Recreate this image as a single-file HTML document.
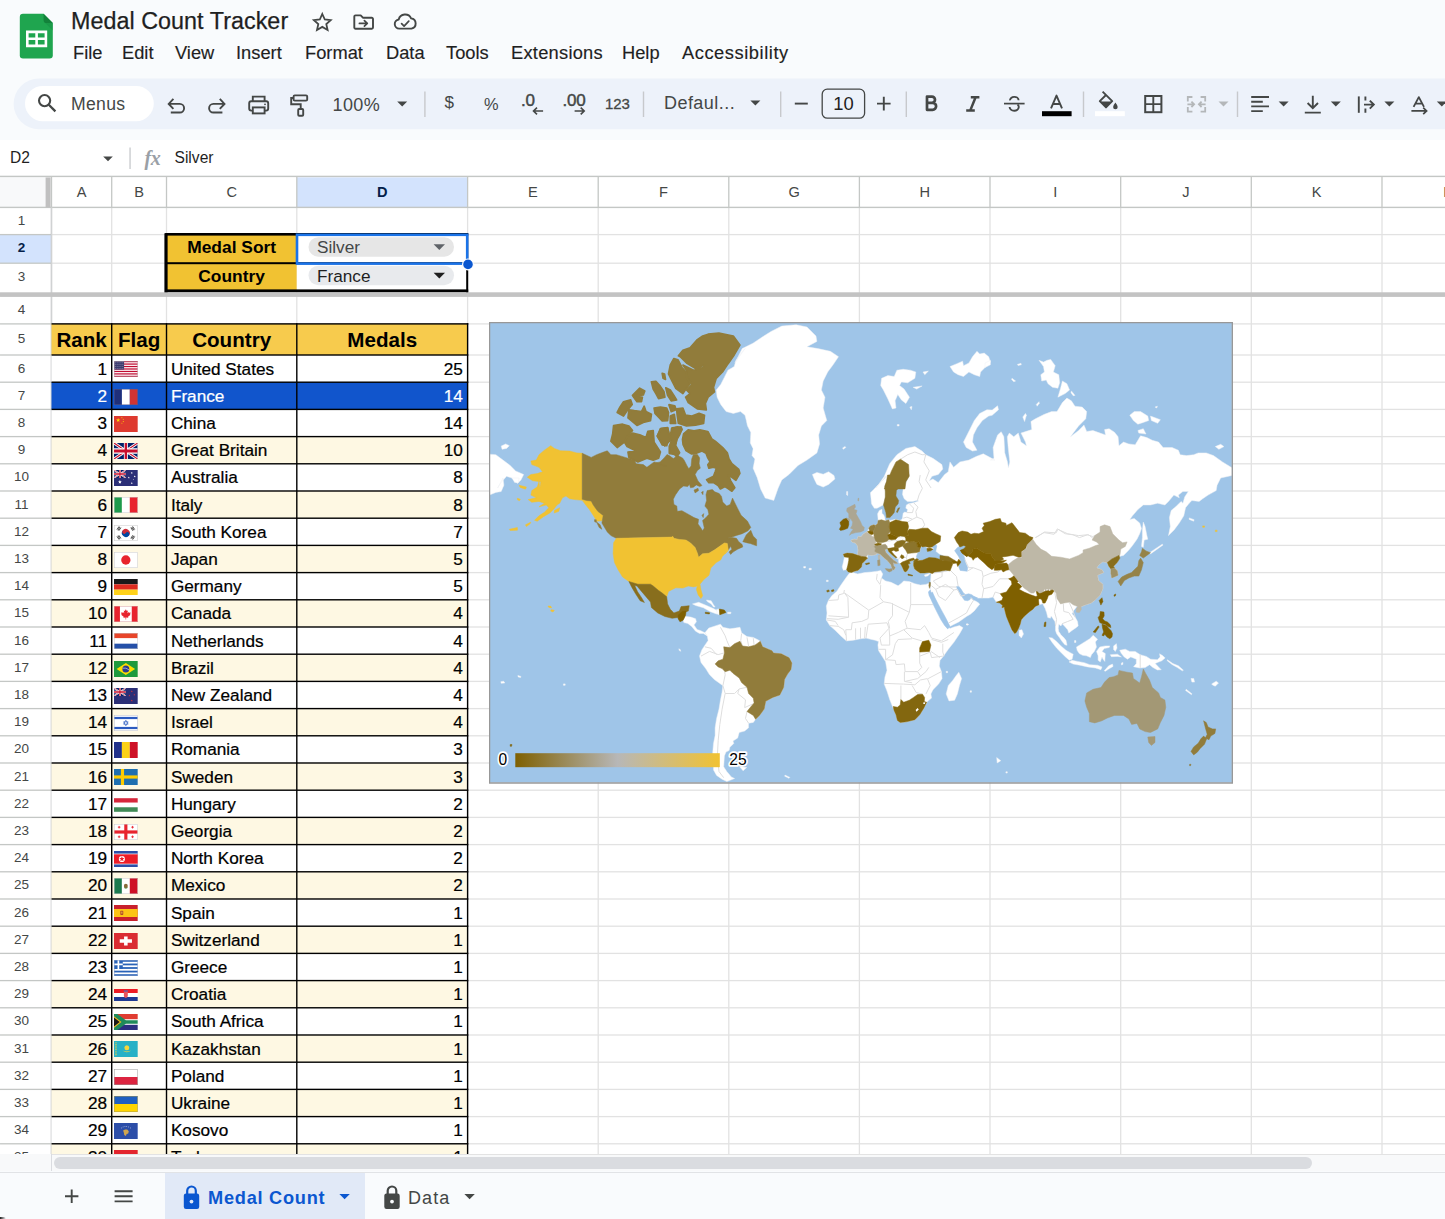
<!DOCTYPE html>
<html lang="en"><head><meta charset="utf-8"><title>Medal Count Tracker - Google Sheets</title>
<style>
*{box-sizing:border-box;margin:0;padding:0}
html,body{width:1445px;height:1219px;overflow:hidden;background:#f9fbfd;font-family:"Liberation Sans",sans-serif;color:#1f1f1f}
body{position:relative}
.abs{position:absolute}
#title{position:absolute;left:71px;top:6px;font-size:23.3px;line-height:30px;color:#1f1f1f;white-space:nowrap;letter-spacing:0.05px;-webkit-text-stroke:.25px #1f1f1f}
.menu{-webkit-text-stroke:.15px currentColor;position:absolute;top:40.5px;font-size:18.3px;line-height:24px;color:#1f1f1f;white-space:nowrap}
#toolbar{position:absolute;left:13.5px;top:78.5px;width:1460px;height:51px;border-radius:25.5px;background:#edf2fa}
#search{position:absolute;left:25px;top:86px;width:129px;height:35.5px;border-radius:18px;background:#fff}
.tb{position:absolute;color:#444746;white-space:nowrap;font-size:17.5px;line-height:24px;top:92.5px}
#tbsvg{position:absolute;left:0;top:0;pointer-events:none}
#fbar{position:absolute;left:0;top:139.8px;width:1445px;height:36.6px;background:#fff}
#fbar .t1{position:absolute;left:10px;top:6.8px;font-size:15.6px;line-height:22px;color:#1f1f1f}
#fbar .t2{position:absolute;left:174.5px;top:6.8px;font-size:15.6px;line-height:22px;color:#1f1f1f}
#grid{position:absolute;left:0;width:1445px;overflow:hidden;background:#fff}
.gridsvg{position:absolute;left:0;top:0;display:block}
.t{position:absolute;white-space:nowrap;overflow:visible}
.ch{text-align:center;font-size:14.6px;color:#444746}
.rh{text-align:center;font-size:13.5px;color:#444746}
.ch.sel,.rh.sel{font-weight:bold;color:#041e49}
.lab{text-align:center;font-weight:bold;font-size:17.4px;color:#000}
.chipt{font-size:17.2px;color:#1f1f1f}
.th{text-align:center;font-weight:bold;font-size:20.6px;color:#000}
.num{text-align:right;font-size:17.2px;color:#000;-webkit-text-stroke:.22px currentColor}
.nm{text-align:left;font-size:17.2px;color:#000;-webkit-text-stroke:.22px currentColor}
.w{color:#fff}
.flag{position:absolute;width:23.7px;height:16px;line-height:0}
.flag>svg{display:block;width:23.7px;height:16px}
#hscroll{position:absolute;left:0;top:1154.2px;width:1445px;height:17.3px;background:#f8f9fa;border-top:1px solid #e3e3e3}
#hthumb{position:absolute;left:54px;top:1157.2px;width:1258px;height:11.4px;border-radius:6px;background:#dadce0}
#tabs{position:absolute;left:0;top:1171.5px;width:1445px;height:48px;background:#f9fbfd;border-top:1.3px solid #e1e3e6}
#tabact{position:absolute;left:165px;top:1172.5px;width:200px;height:47px;background:#e1e9f7}
.tabt{position:absolute;top:1184.5px;font-size:18.2px;line-height:26px;white-space:nowrap;letter-spacing:0.75px}
#chart{position:absolute}

#fx{position:absolute;left:144.5px;top:147px;font-family:"Liberation Serif",serif;font-style:italic;font-weight:bold;font-size:20px;line-height:22px;color:#9aa0a6;letter-spacing:-.5px}

</style></head>
<body>

<!-- ===== title bar ===== -->
<svg class="abs" style="left:19px;top:13px" width="36" height="47" viewBox="19 13 36 47">
  <path d="M23 13.8 H43.6 L52.8 23 V55.3 a3.2 3.2 0 0 1 -3.2 3.2 H23 a3.2 3.2 0 0 1 -3.2 -3.2 V17 a3.2 3.2 0 0 1 3.2 -3.2z" fill="#1fa54f"/>
  <path d="M43.6 13.8 L52.8 23 H46.4 a2.8 2.8 0 0 1 -2.8 -2.8z" fill="#13823b"/>
  <path d="M44.4 22.2 L52.8 30.6 V23 H46.4z" fill="#158f43" opacity=".5"/>
  <path d="M26 30.6 h21.2 v16.6 h-21.2z M28.6 33.2 v4.3 h6.7 v-4.3z M37.9 33.2 v4.3 h6.7 v-4.3z M28.6 40.1 v4.5 h6.7 v-4.5z M37.9 40.1 v4.5 h6.7 v-4.5z" fill="#fff" fill-rule="evenodd"/>
</svg>
<div id="title">Medal Count Tracker</div>
<svg class="abs" style="left:305px;top:8px" width="120" height="28" viewBox="305 8 120 28" fill="none" stroke="#444746" stroke-width="1.9" stroke-linejoin="round" stroke-linecap="round">
  <!-- star -->
  <path d="M322.3 14 l2.5 5.5 5.9 .6 -4.4 4 1.3 5.9 -5.3 -3.1 -5.3 3.1 1.3 -5.9 -4.4 -4 5.9 -.6z" stroke-width="1.8" stroke-linejoin="miter"/>
  <!-- folder move -->
  <path d="M354.3 16.6 a1.2 1.2 0 0 1 1.2 -1.2 h5.2 l2.2 2.3 h8.9 a1.2 1.2 0 0 1 1.2 1.2 v8.7 a1.2 1.2 0 0 1 -1.2 1.2 h-16.3 a1.2 1.2 0 0 1 -1.2 -1.2z"/>
  <path d="M359.4 23.4 h7.4 M364.4 20.6 l2.9 2.8 -2.9 2.8" stroke-width="1.7"/>
  <!-- cloud done -->
  <path d="M399.2 28.6 a4.6 4.6 0 0 1 -.5 -9.15 a6.6 6.6 0 0 1 12.4 -1.1 a5.2 5.2 0 0 1 .4 10.25z"/>
  <path d="M401.6 23.6 l2.5 2.5 4.7 -4.9" stroke-width="1.7"/>
</svg>
<div class="menu" style="left:73px">File</div>
<div class="menu" style="left:122px">Edit</div>
<div class="menu" style="left:175px">View</div>
<div class="menu" style="left:236px">Insert</div>
<div class="menu" style="left:305px">Format</div>
<div class="menu" style="left:386px">Data</div>
<div class="menu" style="left:446px">Tools</div>
<div class="menu" style="left:511px;letter-spacing:.25px">Extensions</div>
<div class="menu" style="left:622px">Help</div>
<div class="menu" style="left:682px;letter-spacing:.55px">Accessibility</div>

<!-- ===== toolbar ===== -->
<svg class="abs" style="left:0;top:70px" width="1445" height="70" viewBox="0 70 1445 70"><rect x="13.6" y="78.6" width="1470" height="50.6" rx="25.3" fill="#edf2fa"/><rect x="25" y="85.9" width="128.8" height="35.4" rx="17.7" fill="#fff"/></svg>
<div class="tb" style="left:71px;font-size:17.6px;top:91.5px;letter-spacing:.3px">Menus</div>
<div class="tb" style="left:332.5px;font-size:18px;top:93px;letter-spacing:.4px">100%</div>
<div class="tb" style="left:444.5px;font-size:17px;top:91px">$</div>
<div class="tb" style="left:484px;font-size:16.4px;top:91.5px">%</div>
<div class="tb" style="left:521px;font-size:17px;top:88.5px;-webkit-text-stroke:.45px #444746;letter-spacing:-.2px">.0</div>
<div class="tb" style="left:562.5px;font-size:17px;top:88.5px;-webkit-text-stroke:.45px #444746;letter-spacing:-.2px">.00</div>
<div class="tb" style="left:605px;font-size:15px;top:91.5px;-webkit-text-stroke:.3px #444746;letter-spacing:-.1px">123</div>
<div class="tb" style="left:664px;font-size:18px;top:91px;letter-spacing:.45px">Defaul...</div>
<div class="tb" style="left:821.6px;width:43.6px;text-align:center;font-size:18.4px;top:92px;color:#1f1f1f">10</div>
<svg id="tbsvg" width="1445" height="140" viewBox="0 0 1445 140" fill="none" stroke="#444746" stroke-width="2" stroke-linecap="butt" stroke-linejoin="miter">
  <!-- search icon -->
  <circle cx="44.6" cy="100.6" r="5.6" stroke-width="2.1"/>
  <path d="M48.8 104.8 l6.6 6.6" stroke-width="2.3"/>
  <!-- undo -->
  <path d="M173.4 98.9 L168.7 103.9 L173.4 108.9 M169.3 103.9 H179.8 a4.3 4.3 0 0 1 0 8.6 H170.8" stroke-width="1.9"/>
  <!-- redo -->
  <path d="M219.8 98.9 L224.5 103.9 L219.8 108.9 M223.9 103.9 H213.4 a4.3 4.3 0 0 0 0 8.6 H222.4" stroke-width="1.9"/>
  <!-- print -->
  <path d="M252.8 101.2 V96.6 H264.6 V101.2" stroke-width="1.9"/>
  <rect x="249.2" y="101.2" width="19" height="9.4" rx="2" stroke-width="1.9"/>
  <rect x="252.8" y="107.4" width="11.8" height="6" fill="#edf2fa" stroke-width="1.9"/>
  <circle cx="265" cy="104.3" r=".9" fill="#444746" stroke="none"/>
  <!-- paint format -->
  <rect x="293.6" y="95.4" width="13.6" height="5.2" rx="1.2" stroke-width="1.9"/>
  <path d="M293.6 98 H291.2 V104.2 H300.7 V109" stroke-width="1.9"/>
  <rect x="298.2" y="109" width="5" height="6.8" rx="1" stroke-width="1.9"/>
  <!-- dropdown arrows -->
  <g fill="#444746" stroke="none">
    <path d="M397.2 101.4 h10 l-5 5z"/>
    <path d="M750.4 100.4 h10 l-5 5z"/>
    <path d="M1278.6 101.4 h10 l-5 5z"/>
    <path d="M1330.8 101.4 h10 l-5 5z"/>
    <path d="M1384.4 101.4 h10 l-5 5z"/>
    <path d="M1436.8 101.4 h10 l-5 5z"/>
    <path d="M1218.5 101.4 h10 l-5 5z" fill="#b4b7b9"/>
  </g>
  <!-- separators -->
  <g fill="#c7c9cc" stroke="none">
    <rect x="424.2" y="91.5" width="1.4" height="25.5"/>
    <rect x="642.8" y="91.5" width="1.4" height="25.5"/>
    <rect x="780" y="91.5" width="1.4" height="25.5"/>
    <rect x="905.6" y="91.5" width="1.4" height="25.5"/>
    <rect x="1082.8" y="91.5" width="1.4" height="25.5"/>
    <rect x="1236.8" y="91.5" width="1.4" height="25.5"/>
  </g>
  <!-- decimal arrows -->
  <path d="M533.5 111 h9.6 M537 107.6 l-3.5 3.4 3.5 3.4" stroke-width="1.6"/>
  <path d="M574.6 111 h9.6 M580.7 107.6 l3.5 3.4 -3.5 3.4" stroke-width="1.6"/>
  <!-- minus / plus -->
  <path d="M794.8 103.6 h13" stroke-width="1.9"/>
  <rect x="822.2" y="89.2" width="42.4" height="29" rx="5" stroke-width="1.3" stroke="#444746"/>
  <path d="M877 103.6 h13.6 M883.8 96.8 v13.6" stroke-width="1.9"/>
  <!-- bold -->
  <path d="M927 96.6 h4.9 a3.1 3.1 0 0 1 0 6.2 h-4.9z M927 102.8 h5.6 a3.5 3.5 0 0 1 0 7 h-5.6z" stroke-width="2.7" stroke-linejoin="round"/>
  <!-- italic -->
  <path d="M970.8 97.2 h8.6 M966.2 110.6 h8.6 M975.6 97.2 l-5.4 13.4" stroke-width="2.5"/>
  <!-- strikethrough -->
  <path d="M1004 103.6 h20.6" stroke-width="1.7"/>
  <path d="M1018.6 100.2 a4.3 3.4 0 0 0 -8.6 .2 M1009.6 107 a4.5 3.6 0 0 0 9.2 0.1 q0 -1.6 -1.3 -2.6" stroke-width="1.9"/>
  <!-- text color -->
  <path d="M1051 108.4 l5.5 -12.8 5.5 12.8 M1052.9 104 h7.2" stroke-width="1.9" stroke-linejoin="round"/>
  <rect x="1042" y="111.2" width="29.6" height="5" fill="#000" stroke="none"/>
  <!-- fill color -->
  <rect x="1095" y="111.2" width="29.8" height="5" fill="#fff" stroke="none"/>
  <path d="M1102.6 91.6 l9.6 9.6 -6.2 6.2 -6.2 -6.2 6.2 -6.2" stroke-width="1.9" stroke-linejoin="round"/>
  <path d="M1100.2 101.4 h11.6 l-5.8 5.8z" fill="#444746" stroke="none"/>
  <path d="M1115.4 102.6 q2.3 3 2.3 4.3 a2.3 2.3 0 0 1 -4.6 0 q0 -1.3 2.3 -4.3z" fill="#444746" stroke="none"/>
  <!-- borders -->
  <rect x="1145.2" y="96" width="16.2" height="16.2" stroke-width="2"/>
  <path d="M1153.3 96 v16.2 M1145.2 104.1 h16.2" stroke-width="1.9"/>
  <!-- merge (disabled) -->
  <g stroke="#b4b7b9" stroke-width="1.8">
    <path d="M1192.4 97 h-4.6 v4.6 M1200.6 97 h4.6 v4.6 M1192.4 111.6 h-4.6 v-4.6 M1200.6 111.6 h4.6 v-4.6"/>
    <path d="M1187.4 104.3 h6.6 M1191.4 101.6 l2.7 2.7 -2.7 2.7 M1205.6 104.3 h-6.6 M1201.6 101.6 l-2.7 2.7 2.7 2.7"/>
  </g>
  <!-- h-align -->
  <path d="M1251.2 97 h17.8 M1251.2 101.7 h11.6 M1251.2 106.4 h17.8 M1251.2 111.1 h11.6" stroke-width="1.9"/>
  <!-- v-align -->
  <path d="M1304.8 112.6 h16 M1312.8 95.8 v12.2 M1307.6 103 l5.2 5.2 5.2 -5.2" stroke-width="1.9"/>
  <!-- wrap -->
  <path d="M1358.8 96.4 v16.4" stroke-width="1.9"/>
  <path d="M1365.4 96.4 v4.2 M1365.4 108.6 v4.2" stroke-width="1.9"/>
  <path d="M1364 104.6 h9.4 M1369.8 100.6 l4 4 -4 4" stroke-width="1.9"/>
  <!-- rotate -->
  <path d="M1413.6 106.9 l5.2 -9.8 5.2 9.8 M1415.4 103.6 h6.8" stroke-width="1.8" stroke-linejoin="round"/>
  <path d="M1411.4 110.9 h15 M1423.2 107.6 l3.4 3.3 -3.4 3.3" stroke-width="1.7"/>
</svg>

<!-- ===== formula bar ===== -->
<div id="fbar">
  <div class="t1">D2</div>
  <div class="t2">Silver</div>
  <svg class="abs" style="left:95px;top:-1.8px" width="80" height="38" viewBox="95 138 80 38">
    <path d="M103.2 156.4 h9.6 l-4.8 4.8z" fill="#444746"/>
    <rect x="129.4" y="147.5" width="1.3" height="21.5" fill="#c7c9cc"/>
    
  </svg>
</div>

<div id="fx">fx</div>

<div id="grid" style="top:175px;height:979.2px">
<svg class="gridsvg" width="1445" height="979.2" viewBox="0 175 1445 979.2" shape-rendering="geometricPrecision">
<rect x="0" y="175" width="1445" height="979.2" fill="#fff"/>
<rect x="0" y="176.4" width="1445" height="31" fill="#fff"/>
<rect x="0" y="176.4" width="46" height="31" fill="#f8f9fa"/>
<rect x="0" y="207.4" width="51" height="946.8" fill="#fff"/>
<rect x="296.8" y="177.4" width="170.8" height="30" fill="#d3e3fd"/>
<rect x="0" y="234.6" width="51" height="28.6" fill="#d3e3fd"/>
<rect x="111.05" y="207.4" width="1.3" height="946.8" fill="#e2e2e2"/>
<rect x="165.85" y="207.4" width="1.3" height="946.8" fill="#e2e2e2"/>
<rect x="296.15" y="207.4" width="1.3" height="946.8" fill="#e2e2e2"/>
<rect x="466.95" y="207.4" width="1.3" height="946.8" fill="#e2e2e2"/>
<rect x="597.55" y="207.4" width="1.3" height="946.8" fill="#e2e2e2"/>
<rect x="728.15" y="207.4" width="1.3" height="946.8" fill="#e2e2e2"/>
<rect x="858.75" y="207.4" width="1.3" height="946.8" fill="#e2e2e2"/>
<rect x="989.35" y="207.4" width="1.3" height="946.8" fill="#e2e2e2"/>
<rect x="1120.05" y="207.4" width="1.3" height="946.8" fill="#e2e2e2"/>
<rect x="1250.65" y="207.4" width="1.3" height="946.8" fill="#e2e2e2"/>
<rect x="1381.35" y="207.4" width="1.3" height="946.8" fill="#e2e2e2"/>
<rect x="1511.95" y="207.4" width="1.3" height="946.8" fill="#e2e2e2"/>
<rect x="51" y="233.95" width="1445" height="1.3" fill="#e2e2e2"/>
<rect x="51" y="262.55" width="1445" height="1.3" fill="#e2e2e2"/>
<rect x="51" y="323.25" width="1445" height="1.3" fill="#e2e2e2"/>
<rect x="51" y="354.35" width="1445" height="1.3" fill="#e2e2e2"/>
<rect x="51" y="381.55" width="1445" height="1.3" fill="#e2e2e2"/>
<rect x="51" y="408.75" width="1445" height="1.3" fill="#e2e2e2"/>
<rect x="51" y="435.95" width="1445" height="1.3" fill="#e2e2e2"/>
<rect x="51" y="463.15" width="1445" height="1.3" fill="#e2e2e2"/>
<rect x="51" y="490.35" width="1445" height="1.3" fill="#e2e2e2"/>
<rect x="51" y="517.55" width="1445" height="1.3" fill="#e2e2e2"/>
<rect x="51" y="544.75" width="1445" height="1.3" fill="#e2e2e2"/>
<rect x="51" y="571.95" width="1445" height="1.3" fill="#e2e2e2"/>
<rect x="51" y="599.15" width="1445" height="1.3" fill="#e2e2e2"/>
<rect x="51" y="626.35" width="1445" height="1.3" fill="#e2e2e2"/>
<rect x="51" y="653.55" width="1445" height="1.3" fill="#e2e2e2"/>
<rect x="51" y="680.75" width="1445" height="1.3" fill="#e2e2e2"/>
<rect x="51" y="707.95" width="1445" height="1.3" fill="#e2e2e2"/>
<rect x="51" y="735.15" width="1445" height="1.3" fill="#e2e2e2"/>
<rect x="51" y="762.35" width="1445" height="1.3" fill="#e2e2e2"/>
<rect x="51" y="789.55" width="1445" height="1.3" fill="#e2e2e2"/>
<rect x="51" y="816.75" width="1445" height="1.3" fill="#e2e2e2"/>
<rect x="51" y="843.95" width="1445" height="1.3" fill="#e2e2e2"/>
<rect x="51" y="871.15" width="1445" height="1.3" fill="#e2e2e2"/>
<rect x="51" y="898.35" width="1445" height="1.3" fill="#e2e2e2"/>
<rect x="51" y="925.55" width="1445" height="1.3" fill="#e2e2e2"/>
<rect x="51" y="952.75" width="1445" height="1.3" fill="#e2e2e2"/>
<rect x="51" y="979.95" width="1445" height="1.3" fill="#e2e2e2"/>
<rect x="51" y="1007.15" width="1445" height="1.3" fill="#e2e2e2"/>
<rect x="51" y="1034.35" width="1445" height="1.3" fill="#e2e2e2"/>
<rect x="51" y="1061.55" width="1445" height="1.3" fill="#e2e2e2"/>
<rect x="51" y="1088.75" width="1445" height="1.3" fill="#e2e2e2"/>
<rect x="51" y="1115.95" width="1445" height="1.3" fill="#e2e2e2"/>
<rect x="51" y="1143.15" width="1445" height="1.3" fill="#e2e2e2"/>
<rect x="51" y="1170.35" width="1445" height="1.3" fill="#e2e2e2"/>
<rect x="0" y="175.7" width="1445" height="1.4" fill="#c4c7c5"/>
<rect x="0" y="206.7" width="1445" height="1.4" fill="#c4c7c5"/>
<rect x="50.85" y="176.4" width="1.3" height="31" fill="#c4c7c5"/>
<rect x="111.05" y="176.4" width="1.3" height="31" fill="#c4c7c5"/>
<rect x="165.85" y="176.4" width="1.3" height="31" fill="#c4c7c5"/>
<rect x="296.15" y="176.4" width="1.3" height="31" fill="#c4c7c5"/>
<rect x="466.95" y="176.4" width="1.3" height="31" fill="#c4c7c5"/>
<rect x="597.55" y="176.4" width="1.3" height="31" fill="#c4c7c5"/>
<rect x="728.15" y="176.4" width="1.3" height="31" fill="#c4c7c5"/>
<rect x="858.75" y="176.4" width="1.3" height="31" fill="#c4c7c5"/>
<rect x="989.35" y="176.4" width="1.3" height="31" fill="#c4c7c5"/>
<rect x="1120.05" y="176.4" width="1.3" height="31" fill="#c4c7c5"/>
<rect x="1250.65" y="176.4" width="1.3" height="31" fill="#c4c7c5"/>
<rect x="1381.35" y="176.4" width="1.3" height="31" fill="#c4c7c5"/>
<rect x="1511.95" y="176.4" width="1.3" height="31" fill="#c4c7c5"/>
<rect x="50.6" y="207.4" width="1.7" height="946.8" fill="#d0d2d3"/>
<rect x="0" y="233.95" width="51" height="1.3" fill="#c4c7c5"/>
<rect x="0" y="262.55" width="51" height="1.3" fill="#c4c7c5"/>
<rect x="0" y="323.25" width="51" height="1.3" fill="#c4c7c5"/>
<rect x="0" y="354.35" width="51" height="1.3" fill="#c4c7c5"/>
<rect x="0" y="381.55" width="51" height="1.3" fill="#c4c7c5"/>
<rect x="0" y="408.75" width="51" height="1.3" fill="#c4c7c5"/>
<rect x="0" y="435.95" width="51" height="1.3" fill="#c4c7c5"/>
<rect x="0" y="463.15" width="51" height="1.3" fill="#c4c7c5"/>
<rect x="0" y="490.35" width="51" height="1.3" fill="#c4c7c5"/>
<rect x="0" y="517.55" width="51" height="1.3" fill="#c4c7c5"/>
<rect x="0" y="544.75" width="51" height="1.3" fill="#c4c7c5"/>
<rect x="0" y="571.95" width="51" height="1.3" fill="#c4c7c5"/>
<rect x="0" y="599.15" width="51" height="1.3" fill="#c4c7c5"/>
<rect x="0" y="626.35" width="51" height="1.3" fill="#c4c7c5"/>
<rect x="0" y="653.55" width="51" height="1.3" fill="#c4c7c5"/>
<rect x="0" y="680.75" width="51" height="1.3" fill="#c4c7c5"/>
<rect x="0" y="707.95" width="51" height="1.3" fill="#c4c7c5"/>
<rect x="0" y="735.15" width="51" height="1.3" fill="#c4c7c5"/>
<rect x="0" y="762.35" width="51" height="1.3" fill="#c4c7c5"/>
<rect x="0" y="789.55" width="51" height="1.3" fill="#c4c7c5"/>
<rect x="0" y="816.75" width="51" height="1.3" fill="#c4c7c5"/>
<rect x="0" y="843.95" width="51" height="1.3" fill="#c4c7c5"/>
<rect x="0" y="871.15" width="51" height="1.3" fill="#c4c7c5"/>
<rect x="0" y="898.35" width="51" height="1.3" fill="#c4c7c5"/>
<rect x="0" y="925.55" width="51" height="1.3" fill="#c4c7c5"/>
<rect x="0" y="952.75" width="51" height="1.3" fill="#c4c7c5"/>
<rect x="0" y="979.95" width="51" height="1.3" fill="#c4c7c5"/>
<rect x="0" y="1007.15" width="51" height="1.3" fill="#c4c7c5"/>
<rect x="0" y="1034.35" width="51" height="1.3" fill="#c4c7c5"/>
<rect x="0" y="1061.55" width="51" height="1.3" fill="#c4c7c5"/>
<rect x="0" y="1088.75" width="51" height="1.3" fill="#c4c7c5"/>
<rect x="0" y="1115.95" width="51" height="1.3" fill="#c4c7c5"/>
<rect x="0" y="1143.15" width="51" height="1.3" fill="#c4c7c5"/>
<rect x="0" y="1170.35" width="51" height="1.3" fill="#c4c7c5"/>
<rect x="0" y="1197.55" width="51" height="1.3" fill="#c4c7c5"/>
<rect x="45.6" y="177.4" width="5" height="30" fill="#c0c0c0"/>
<rect x="166.5" y="234.6" width="130.3" height="57" fill="#f1c232"/>
<rect x="296.8" y="234.6" width="170.8" height="57" fill="#fff"/>
<rect x="51.5" y="323.9" width="416.1" height="31.1" fill="#f7cb4d"/>
<rect x="51.5" y="355" width="416.1" height="27.2" fill="#fff"/>
<rect x="51.5" y="382.2" width="416.1" height="27.2" fill="#1155cc"/>
<rect x="51.5" y="409.4" width="416.1" height="27.2" fill="#fff"/>
<rect x="51.5" y="436.6" width="416.1" height="27.2" fill="#fef8e3"/>
<rect x="51.5" y="463.8" width="416.1" height="27.2" fill="#fff"/>
<rect x="51.5" y="491" width="416.1" height="27.2" fill="#fef8e3"/>
<rect x="51.5" y="518.2" width="416.1" height="27.2" fill="#fff"/>
<rect x="51.5" y="545.4" width="416.1" height="27.2" fill="#fef8e3"/>
<rect x="51.5" y="572.6" width="416.1" height="27.2" fill="#fff"/>
<rect x="51.5" y="599.8" width="416.1" height="27.2" fill="#fef8e3"/>
<rect x="51.5" y="627" width="416.1" height="27.2" fill="#fff"/>
<rect x="51.5" y="654.2" width="416.1" height="27.2" fill="#fef8e3"/>
<rect x="51.5" y="681.4" width="416.1" height="27.2" fill="#fff"/>
<rect x="51.5" y="708.6" width="416.1" height="27.2" fill="#fef8e3"/>
<rect x="51.5" y="735.8" width="416.1" height="27.2" fill="#fff"/>
<rect x="51.5" y="763" width="416.1" height="27.2" fill="#fef8e3"/>
<rect x="51.5" y="790.2" width="416.1" height="27.2" fill="#fff"/>
<rect x="51.5" y="817.4" width="416.1" height="27.2" fill="#fef8e3"/>
<rect x="51.5" y="844.6" width="416.1" height="27.2" fill="#fff"/>
<rect x="51.5" y="871.8" width="416.1" height="27.2" fill="#fef8e3"/>
<rect x="51.5" y="899" width="416.1" height="27.2" fill="#fff"/>
<rect x="51.5" y="926.2" width="416.1" height="27.2" fill="#fef8e3"/>
<rect x="51.5" y="953.4" width="416.1" height="27.2" fill="#fff"/>
<rect x="51.5" y="980.6" width="416.1" height="27.2" fill="#fef8e3"/>
<rect x="51.5" y="1007.8" width="416.1" height="27.2" fill="#fff"/>
<rect x="51.5" y="1035" width="416.1" height="27.2" fill="#fef8e3"/>
<rect x="51.5" y="1062.2" width="416.1" height="27.2" fill="#fff"/>
<rect x="51.5" y="1089.4" width="416.1" height="27.2" fill="#fef8e3"/>
<rect x="51.5" y="1116.6" width="416.1" height="27.2" fill="#fff"/>
<rect x="51.5" y="1143.8" width="416.1" height="27.2" fill="#fef8e3"/>
<rect x="51.5" y="1171" width="416.1" height="27.2" fill="#fff"/>
<rect x="51.5" y="323.2" width="416.8" height="1.4" fill="#000"/>
<rect x="51.5" y="354.3" width="416.8" height="1.4" fill="#000"/>
<rect x="51.5" y="381.5" width="416.8" height="1.4" fill="#000"/>
<rect x="51.5" y="408.7" width="416.8" height="1.4" fill="#000"/>
<rect x="51.5" y="435.9" width="416.8" height="1.4" fill="#000"/>
<rect x="51.5" y="463.1" width="416.8" height="1.4" fill="#000"/>
<rect x="51.5" y="490.3" width="416.8" height="1.4" fill="#000"/>
<rect x="51.5" y="517.5" width="416.8" height="1.4" fill="#000"/>
<rect x="51.5" y="544.7" width="416.8" height="1.4" fill="#000"/>
<rect x="51.5" y="571.9" width="416.8" height="1.4" fill="#000"/>
<rect x="51.5" y="599.1" width="416.8" height="1.4" fill="#000"/>
<rect x="51.5" y="626.3" width="416.8" height="1.4" fill="#000"/>
<rect x="51.5" y="653.5" width="416.8" height="1.4" fill="#000"/>
<rect x="51.5" y="680.7" width="416.8" height="1.4" fill="#000"/>
<rect x="51.5" y="707.9" width="416.8" height="1.4" fill="#000"/>
<rect x="51.5" y="735.1" width="416.8" height="1.4" fill="#000"/>
<rect x="51.5" y="762.3" width="416.8" height="1.4" fill="#000"/>
<rect x="51.5" y="789.5" width="416.8" height="1.4" fill="#000"/>
<rect x="51.5" y="816.7" width="416.8" height="1.4" fill="#000"/>
<rect x="51.5" y="843.9" width="416.8" height="1.4" fill="#000"/>
<rect x="51.5" y="871.1" width="416.8" height="1.4" fill="#000"/>
<rect x="51.5" y="898.3" width="416.8" height="1.4" fill="#000"/>
<rect x="51.5" y="925.5" width="416.8" height="1.4" fill="#000"/>
<rect x="51.5" y="952.7" width="416.8" height="1.4" fill="#000"/>
<rect x="51.5" y="979.9" width="416.8" height="1.4" fill="#000"/>
<rect x="51.5" y="1007.1" width="416.8" height="1.4" fill="#000"/>
<rect x="51.5" y="1034.3" width="416.8" height="1.4" fill="#000"/>
<rect x="51.5" y="1061.5" width="416.8" height="1.4" fill="#000"/>
<rect x="51.5" y="1088.7" width="416.8" height="1.4" fill="#000"/>
<rect x="51.5" y="1115.9" width="416.8" height="1.4" fill="#000"/>
<rect x="51.5" y="1143.1" width="416.8" height="1.4" fill="#000"/>
<rect x="51.5" y="1170.3" width="416.8" height="1.4" fill="#000"/>
<rect x="111" y="323.2" width="1.4" height="836" fill="#000"/>
<rect x="165.8" y="323.2" width="1.4" height="836" fill="#000"/>
<rect x="296.1" y="323.2" width="1.4" height="836" fill="#000"/>
<rect x="466.9" y="323.2" width="1.4" height="836" fill="#000"/>
<rect x="165.2" y="233" width="303" height="2.6" fill="#000"/>
<rect x="165.2" y="289.4" width="303" height="3" fill="#000"/>
<rect x="164.4" y="233.3" width="3.2" height="59.7" fill="#000"/>
<rect x="466.2" y="233.3" width="2" height="59.7" fill="#000"/>
<rect x="166.5" y="262.2" width="301.1" height="2" fill="#000"/>
<rect x="0" y="292.3" width="1445" height="4.6" fill="#c3c3c3"/>
<rect x="308.5" y="237.15" width="145.5" height="19.5" rx="9.75" fill="#e6e6e6"/>
<path d="M433.6 244.3 h11.4 l-5.7 5.6z" fill="#5f6368"/>
<rect x="308.5" y="265.65" width="145.5" height="19.5" rx="9.75" fill="#e8eaed"/>
<path d="M433.6 272.8 h11.4 l-5.7 5.6z" fill="#1f1f1f"/>
<rect x="297" y="234.8" width="170.2" height="28.8" fill="none" stroke="#1a73e8" stroke-width="2.6"/>
<circle cx="468" cy="264.4" r="5.4" fill="#0b57d0" stroke="#fff" stroke-width="1.2"/>
</svg>
<div class="t ch" style="left:51.5px;top:2.4px;width:60.2px;height:31px;line-height:31px;">A</div>
<div class="t ch" style="left:111.7px;top:2.4px;width:54.8px;height:31px;line-height:31px;">B</div>
<div class="t ch" style="left:166.5px;top:2.4px;width:130.3px;height:31px;line-height:31px;">C</div>
<div class="t ch sel" style="left:296.8px;top:2.4px;width:170.8px;height:31px;line-height:31px;">D</div>
<div class="t ch" style="left:467.6px;top:2.4px;width:130.6px;height:31px;line-height:31px;">E</div>
<div class="t ch" style="left:598.2px;top:2.4px;width:130.6px;height:31px;line-height:31px;">F</div>
<div class="t ch" style="left:728.8px;top:2.4px;width:130.6px;height:31px;line-height:31px;">G</div>
<div class="t ch" style="left:859.4px;top:2.4px;width:130.6px;height:31px;line-height:31px;">H</div>
<div class="t ch" style="left:990px;top:2.4px;width:130.7px;height:31px;line-height:31px;">I</div>
<div class="t ch" style="left:1120.7px;top:2.4px;width:130.6px;height:31px;line-height:31px;">J</div>
<div class="t ch" style="left:1251.3px;top:2.4px;width:130.7px;height:31px;line-height:31px;">K</div>
<div class="t ch" style="left:1382px;top:2.4px;width:130.6px;height:31px;line-height:31px;">L</div>
<div class="t rh" style="left:0px;top:31.9px;width:43.2px;height:27.2px;line-height:27.2px;">1</div>
<div class="t rh sel" style="left:0px;top:59.1px;width:43.2px;height:28.6px;line-height:28.6px;">2</div>
<div class="t rh" style="left:0px;top:87.7px;width:43.2px;height:28.4px;line-height:28.4px;">3</div>
<div class="t rh" style="left:0px;top:121.7px;width:43.2px;height:26.7px;line-height:26.7px;">4</div>
<div class="t rh" style="left:0px;top:148.4px;width:43.2px;height:31.1px;line-height:31.1px;">5</div>
<div class="t rh" style="left:0px;top:179.5px;width:43.2px;height:27.2px;line-height:27.2px;">6</div>
<div class="t rh" style="left:0px;top:206.7px;width:43.2px;height:27.2px;line-height:27.2px;">7</div>
<div class="t rh" style="left:0px;top:233.9px;width:43.2px;height:27.2px;line-height:27.2px;">8</div>
<div class="t rh" style="left:0px;top:261.1px;width:43.2px;height:27.2px;line-height:27.2px;">9</div>
<div class="t rh" style="left:0px;top:288.3px;width:43.2px;height:27.2px;line-height:27.2px;">10</div>
<div class="t rh" style="left:0px;top:315.5px;width:43.2px;height:27.2px;line-height:27.2px;">11</div>
<div class="t rh" style="left:0px;top:342.7px;width:43.2px;height:27.2px;line-height:27.2px;">12</div>
<div class="t rh" style="left:0px;top:369.9px;width:43.2px;height:27.2px;line-height:27.2px;">13</div>
<div class="t rh" style="left:0px;top:397.1px;width:43.2px;height:27.2px;line-height:27.2px;">14</div>
<div class="t rh" style="left:0px;top:424.3px;width:43.2px;height:27.2px;line-height:27.2px;">15</div>
<div class="t rh" style="left:0px;top:451.5px;width:43.2px;height:27.2px;line-height:27.2px;">16</div>
<div class="t rh" style="left:0px;top:478.7px;width:43.2px;height:27.2px;line-height:27.2px;">17</div>
<div class="t rh" style="left:0px;top:505.9px;width:43.2px;height:27.2px;line-height:27.2px;">18</div>
<div class="t rh" style="left:0px;top:533.1px;width:43.2px;height:27.2px;line-height:27.2px;">19</div>
<div class="t rh" style="left:0px;top:560.3px;width:43.2px;height:27.2px;line-height:27.2px;">20</div>
<div class="t rh" style="left:0px;top:587.5px;width:43.2px;height:27.2px;line-height:27.2px;">21</div>
<div class="t rh" style="left:0px;top:614.7px;width:43.2px;height:27.2px;line-height:27.2px;">22</div>
<div class="t rh" style="left:0px;top:641.9px;width:43.2px;height:27.2px;line-height:27.2px;">23</div>
<div class="t rh" style="left:0px;top:669.1px;width:43.2px;height:27.2px;line-height:27.2px;">24</div>
<div class="t rh" style="left:0px;top:696.3px;width:43.2px;height:27.2px;line-height:27.2px;">25</div>
<div class="t rh" style="left:0px;top:723.5px;width:43.2px;height:27.2px;line-height:27.2px;">26</div>
<div class="t rh" style="left:0px;top:750.7px;width:43.2px;height:27.2px;line-height:27.2px;">27</div>
<div class="t rh" style="left:0px;top:777.9px;width:43.2px;height:27.2px;line-height:27.2px;">28</div>
<div class="t rh" style="left:0px;top:805.1px;width:43.2px;height:27.2px;line-height:27.2px;">29</div>
<div class="t rh" style="left:0px;top:832.3px;width:43.2px;height:27.2px;line-height:27.2px;">30</div>
<div class="t rh" style="left:0px;top:859.5px;width:43.2px;height:27.2px;line-height:27.2px;">31</div>
<div class="t rh" style="left:0px;top:886.7px;width:43.2px;height:27.2px;line-height:27.2px;">32</div>
<div class="t rh" style="left:0px;top:913.9px;width:43.2px;height:27.2px;line-height:27.2px;">33</div>
<div class="t rh" style="left:0px;top:941.1px;width:43.2px;height:27.2px;line-height:27.2px;">34</div>
<div class="t rh" style="left:0px;top:968.3px;width:43.2px;height:27.2px;line-height:27.2px;">35</div>
<div class="t lab" style="left:166.5px;top:57.7px;width:130.3px;height:28.6px;line-height:28.6px;">Medal Sort</div>
<div class="t lab" style="left:166.5px;top:87.5px;width:130.3px;height:27.4px;line-height:27.4px;">Country</div>
<div class="t chipt" style="left:317px;top:57.7px;width:100px;height:28.6px;line-height:28.6px;color:#444746">Silver</div>
<div class="t chipt" style="left:317px;top:87.5px;width:100px;height:27.4px;line-height:27.4px;">France</div>
<div class="t th" style="left:51.5px;top:149.2px;width:60.2px;height:31.1px;line-height:31.1px;">Rank</div>
<div class="t th" style="left:111.7px;top:149.2px;width:54.8px;height:31.1px;line-height:31.1px;">Flag</div>
<div class="t th" style="left:166.5px;top:149.2px;width:130.3px;height:31.1px;line-height:31.1px;">Country</div>
<div class="t th" style="left:296.8px;top:149.2px;width:170.8px;height:31.1px;line-height:31.1px;">Medals</div>
<div class="t num" style="left:51.5px;top:180.5px;width:55.6px;height:27.2px;line-height:27.2px;">1</div>
<div class="t nm" style="left:170.9px;top:180.5px;width:124.3px;height:27.2px;line-height:27.2px;">United States</div>
<div class="t num" style="left:296.8px;top:180.5px;width:166px;height:27.2px;line-height:27.2px;">25</div>
<div class="t num w" style="left:51.5px;top:207.7px;width:55.6px;height:27.2px;line-height:27.2px;">2</div>
<div class="t nm w" style="left:170.9px;top:207.7px;width:124.3px;height:27.2px;line-height:27.2px;">France</div>
<div class="t num w" style="left:296.8px;top:207.7px;width:166px;height:27.2px;line-height:27.2px;">14</div>
<div class="t num" style="left:51.5px;top:234.9px;width:55.6px;height:27.2px;line-height:27.2px;">3</div>
<div class="t nm" style="left:170.9px;top:234.9px;width:124.3px;height:27.2px;line-height:27.2px;">China</div>
<div class="t num" style="left:296.8px;top:234.9px;width:166px;height:27.2px;line-height:27.2px;">14</div>
<div class="t num" style="left:51.5px;top:262.1px;width:55.6px;height:27.2px;line-height:27.2px;">4</div>
<div class="t nm" style="left:170.9px;top:262.1px;width:124.3px;height:27.2px;line-height:27.2px;">Great Britain</div>
<div class="t num" style="left:296.8px;top:262.1px;width:166px;height:27.2px;line-height:27.2px;">10</div>
<div class="t num" style="left:51.5px;top:289.3px;width:55.6px;height:27.2px;line-height:27.2px;">5</div>
<div class="t nm" style="left:170.9px;top:289.3px;width:124.3px;height:27.2px;line-height:27.2px;">Australia</div>
<div class="t num" style="left:296.8px;top:289.3px;width:166px;height:27.2px;line-height:27.2px;">8</div>
<div class="t num" style="left:51.5px;top:316.5px;width:55.6px;height:27.2px;line-height:27.2px;">6</div>
<div class="t nm" style="left:170.9px;top:316.5px;width:124.3px;height:27.2px;line-height:27.2px;">Italy</div>
<div class="t num" style="left:296.8px;top:316.5px;width:166px;height:27.2px;line-height:27.2px;">8</div>
<div class="t num" style="left:51.5px;top:343.7px;width:55.6px;height:27.2px;line-height:27.2px;">7</div>
<div class="t nm" style="left:170.9px;top:343.7px;width:124.3px;height:27.2px;line-height:27.2px;">South Korea</div>
<div class="t num" style="left:296.8px;top:343.7px;width:166px;height:27.2px;line-height:27.2px;">7</div>
<div class="t num" style="left:51.5px;top:370.9px;width:55.6px;height:27.2px;line-height:27.2px;">8</div>
<div class="t nm" style="left:170.9px;top:370.9px;width:124.3px;height:27.2px;line-height:27.2px;">Japan</div>
<div class="t num" style="left:296.8px;top:370.9px;width:166px;height:27.2px;line-height:27.2px;">5</div>
<div class="t num" style="left:51.5px;top:398.1px;width:55.6px;height:27.2px;line-height:27.2px;">9</div>
<div class="t nm" style="left:170.9px;top:398.1px;width:124.3px;height:27.2px;line-height:27.2px;">Germany</div>
<div class="t num" style="left:296.8px;top:398.1px;width:166px;height:27.2px;line-height:27.2px;">5</div>
<div class="t num" style="left:51.5px;top:425.3px;width:55.6px;height:27.2px;line-height:27.2px;">10</div>
<div class="t nm" style="left:170.9px;top:425.3px;width:124.3px;height:27.2px;line-height:27.2px;">Canada</div>
<div class="t num" style="left:296.8px;top:425.3px;width:166px;height:27.2px;line-height:27.2px;">4</div>
<div class="t num" style="left:51.5px;top:452.5px;width:55.6px;height:27.2px;line-height:27.2px;">11</div>
<div class="t nm" style="left:170.9px;top:452.5px;width:124.3px;height:27.2px;line-height:27.2px;">Netherlands</div>
<div class="t num" style="left:296.8px;top:452.5px;width:166px;height:27.2px;line-height:27.2px;">4</div>
<div class="t num" style="left:51.5px;top:479.7px;width:55.6px;height:27.2px;line-height:27.2px;">12</div>
<div class="t nm" style="left:170.9px;top:479.7px;width:124.3px;height:27.2px;line-height:27.2px;">Brazil</div>
<div class="t num" style="left:296.8px;top:479.7px;width:166px;height:27.2px;line-height:27.2px;">4</div>
<div class="t num" style="left:51.5px;top:506.9px;width:55.6px;height:27.2px;line-height:27.2px;">13</div>
<div class="t nm" style="left:170.9px;top:506.9px;width:124.3px;height:27.2px;line-height:27.2px;">New Zealand</div>
<div class="t num" style="left:296.8px;top:506.9px;width:166px;height:27.2px;line-height:27.2px;">4</div>
<div class="t num" style="left:51.5px;top:534.1px;width:55.6px;height:27.2px;line-height:27.2px;">14</div>
<div class="t nm" style="left:170.9px;top:534.1px;width:124.3px;height:27.2px;line-height:27.2px;">Israel</div>
<div class="t num" style="left:296.8px;top:534.1px;width:166px;height:27.2px;line-height:27.2px;">4</div>
<div class="t num" style="left:51.5px;top:561.3px;width:55.6px;height:27.2px;line-height:27.2px;">15</div>
<div class="t nm" style="left:170.9px;top:561.3px;width:124.3px;height:27.2px;line-height:27.2px;">Romania</div>
<div class="t num" style="left:296.8px;top:561.3px;width:166px;height:27.2px;line-height:27.2px;">3</div>
<div class="t num" style="left:51.5px;top:588.5px;width:55.6px;height:27.2px;line-height:27.2px;">16</div>
<div class="t nm" style="left:170.9px;top:588.5px;width:124.3px;height:27.2px;line-height:27.2px;">Sweden</div>
<div class="t num" style="left:296.8px;top:588.5px;width:166px;height:27.2px;line-height:27.2px;">3</div>
<div class="t num" style="left:51.5px;top:615.7px;width:55.6px;height:27.2px;line-height:27.2px;">17</div>
<div class="t nm" style="left:170.9px;top:615.7px;width:124.3px;height:27.2px;line-height:27.2px;">Hungary</div>
<div class="t num" style="left:296.8px;top:615.7px;width:166px;height:27.2px;line-height:27.2px;">2</div>
<div class="t num" style="left:51.5px;top:642.9px;width:55.6px;height:27.2px;line-height:27.2px;">18</div>
<div class="t nm" style="left:170.9px;top:642.9px;width:124.3px;height:27.2px;line-height:27.2px;">Georgia</div>
<div class="t num" style="left:296.8px;top:642.9px;width:166px;height:27.2px;line-height:27.2px;">2</div>
<div class="t num" style="left:51.5px;top:670.1px;width:55.6px;height:27.2px;line-height:27.2px;">19</div>
<div class="t nm" style="left:170.9px;top:670.1px;width:124.3px;height:27.2px;line-height:27.2px;">North Korea</div>
<div class="t num" style="left:296.8px;top:670.1px;width:166px;height:27.2px;line-height:27.2px;">2</div>
<div class="t num" style="left:51.5px;top:697.3px;width:55.6px;height:27.2px;line-height:27.2px;">20</div>
<div class="t nm" style="left:170.9px;top:697.3px;width:124.3px;height:27.2px;line-height:27.2px;">Mexico</div>
<div class="t num" style="left:296.8px;top:697.3px;width:166px;height:27.2px;line-height:27.2px;">2</div>
<div class="t num" style="left:51.5px;top:724.5px;width:55.6px;height:27.2px;line-height:27.2px;">21</div>
<div class="t nm" style="left:170.9px;top:724.5px;width:124.3px;height:27.2px;line-height:27.2px;">Spain</div>
<div class="t num" style="left:296.8px;top:724.5px;width:166px;height:27.2px;line-height:27.2px;">1</div>
<div class="t num" style="left:51.5px;top:751.7px;width:55.6px;height:27.2px;line-height:27.2px;">22</div>
<div class="t nm" style="left:170.9px;top:751.7px;width:124.3px;height:27.2px;line-height:27.2px;">Switzerland</div>
<div class="t num" style="left:296.8px;top:751.7px;width:166px;height:27.2px;line-height:27.2px;">1</div>
<div class="t num" style="left:51.5px;top:778.9px;width:55.6px;height:27.2px;line-height:27.2px;">23</div>
<div class="t nm" style="left:170.9px;top:778.9px;width:124.3px;height:27.2px;line-height:27.2px;">Greece</div>
<div class="t num" style="left:296.8px;top:778.9px;width:166px;height:27.2px;line-height:27.2px;">1</div>
<div class="t num" style="left:51.5px;top:806.1px;width:55.6px;height:27.2px;line-height:27.2px;">24</div>
<div class="t nm" style="left:170.9px;top:806.1px;width:124.3px;height:27.2px;line-height:27.2px;">Croatia</div>
<div class="t num" style="left:296.8px;top:806.1px;width:166px;height:27.2px;line-height:27.2px;">1</div>
<div class="t num" style="left:51.5px;top:833.3px;width:55.6px;height:27.2px;line-height:27.2px;">25</div>
<div class="t nm" style="left:170.9px;top:833.3px;width:124.3px;height:27.2px;line-height:27.2px;">South Africa</div>
<div class="t num" style="left:296.8px;top:833.3px;width:166px;height:27.2px;line-height:27.2px;">1</div>
<div class="t num" style="left:51.5px;top:860.5px;width:55.6px;height:27.2px;line-height:27.2px;">26</div>
<div class="t nm" style="left:170.9px;top:860.5px;width:124.3px;height:27.2px;line-height:27.2px;">Kazakhstan</div>
<div class="t num" style="left:296.8px;top:860.5px;width:166px;height:27.2px;line-height:27.2px;">1</div>
<div class="t num" style="left:51.5px;top:887.7px;width:55.6px;height:27.2px;line-height:27.2px;">27</div>
<div class="t nm" style="left:170.9px;top:887.7px;width:124.3px;height:27.2px;line-height:27.2px;">Poland</div>
<div class="t num" style="left:296.8px;top:887.7px;width:166px;height:27.2px;line-height:27.2px;">1</div>
<div class="t num" style="left:51.5px;top:914.9px;width:55.6px;height:27.2px;line-height:27.2px;">28</div>
<div class="t nm" style="left:170.9px;top:914.9px;width:124.3px;height:27.2px;line-height:27.2px;">Ukraine</div>
<div class="t num" style="left:296.8px;top:914.9px;width:166px;height:27.2px;line-height:27.2px;">1</div>
<div class="t num" style="left:51.5px;top:942.1px;width:55.6px;height:27.2px;line-height:27.2px;">29</div>
<div class="t nm" style="left:170.9px;top:942.1px;width:124.3px;height:27.2px;line-height:27.2px;">Kosovo</div>
<div class="t num" style="left:296.8px;top:942.1px;width:166px;height:27.2px;line-height:27.2px;">1</div>
<div class="t num" style="left:51.5px;top:969.3px;width:55.6px;height:27.2px;line-height:27.2px;">30</div>
<div class="t nm" style="left:170.9px;top:969.3px;width:124.3px;height:27.2px;line-height:27.2px;">Turkey</div>
<div class="t num" style="left:296.8px;top:969.3px;width:166px;height:27.2px;line-height:27.2px;">1</div>
<div class="flag" style="left:114.3px;top:186.3px"><svg viewBox="0 0 24 16" preserveAspectRatio="none"><rect width="24" height="16" fill="#fff"/><rect y="0.00" width="24" height="1.23" fill="#bf0a30"/><rect y="2.46" width="24" height="1.23" fill="#bf0a30"/><rect y="4.92" width="24" height="1.23" fill="#bf0a30"/><rect y="7.38" width="24" height="1.23" fill="#bf0a30"/><rect y="9.85" width="24" height="1.23" fill="#bf0a30"/><rect y="12.31" width="24" height="1.23" fill="#bf0a30"/><rect y="14.77" width="24" height="1.23" fill="#bf0a30"/><rect width="10.2" height="8.6" fill="#3c3b6e"/><circle cx="1.20" cy="1.10" r=".42" fill="#fff" opacity=".8"/><circle cx="3.15" cy="1.10" r=".42" fill="#fff" opacity=".8"/><circle cx="5.10" cy="1.10" r=".42" fill="#fff" opacity=".8"/><circle cx="7.05" cy="1.10" r=".42" fill="#fff" opacity=".8"/><circle cx="9.00" cy="1.10" r=".42" fill="#fff" opacity=".8"/><circle cx="1.20" cy="3.20" r=".42" fill="#fff" opacity=".8"/><circle cx="3.15" cy="3.20" r=".42" fill="#fff" opacity=".8"/><circle cx="5.10" cy="3.20" r=".42" fill="#fff" opacity=".8"/><circle cx="7.05" cy="3.20" r=".42" fill="#fff" opacity=".8"/><circle cx="9.00" cy="3.20" r=".42" fill="#fff" opacity=".8"/><circle cx="1.20" cy="5.30" r=".42" fill="#fff" opacity=".8"/><circle cx="3.15" cy="5.30" r=".42" fill="#fff" opacity=".8"/><circle cx="5.10" cy="5.30" r=".42" fill="#fff" opacity=".8"/><circle cx="7.05" cy="5.30" r=".42" fill="#fff" opacity=".8"/><circle cx="9.00" cy="5.30" r=".42" fill="#fff" opacity=".8"/><circle cx="1.20" cy="7.40" r=".42" fill="#fff" opacity=".8"/><circle cx="3.15" cy="7.40" r=".42" fill="#fff" opacity=".8"/><circle cx="5.10" cy="7.40" r=".42" fill="#fff" opacity=".8"/><circle cx="7.05" cy="7.40" r=".42" fill="#fff" opacity=".8"/><circle cx="9.00" cy="7.40" r=".42" fill="#fff" opacity=".8"/><rect x=".25" y=".25" width="23.5" height="15.5" fill="none" stroke="#b8a0a8" stroke-width=".5"/></svg></div>
<div class="flag" style="left:114.3px;top:213.5px"><svg viewBox="0 0 24 16" preserveAspectRatio="none"><rect width="8" height="16" fill="#1f2f7a"/><rect x="8" width="8" height="16" fill="#ffffff"/><rect x="16" width="8" height="16" fill="#d03433"/><rect x=".25" y=".25" width="23.5" height="15.5" fill="none" stroke="#5a5a8a" stroke-width=".5"/></svg></div>
<div class="flag" style="left:114.3px;top:240.7px"><svg viewBox="0 0 24 16" preserveAspectRatio="none"><rect width="24" height="16" fill="#de3a2f"/><polygon points="4.20,1.90 4.74,3.46 6.39,3.49 5.07,4.48 5.55,6.06 4.20,5.12 2.85,6.06 3.33,4.48 2.01,3.49 3.66,3.46" fill="#ffde00"/><polygon points="8.00,1.00 8.19,1.54 8.76,1.55 8.30,1.90 8.47,2.45 8.00,2.12 7.53,2.45 7.70,1.90 7.24,1.55 7.81,1.54" fill="#ffde00"/><polygon points="9.40,2.60 9.59,3.14 10.16,3.15 9.70,3.50 9.87,4.05 9.40,3.72 8.93,4.05 9.10,3.50 8.64,3.15 9.21,3.14" fill="#ffde00"/><polygon points="9.40,4.80 9.59,5.34 10.16,5.35 9.70,5.70 9.87,6.25 9.40,5.92 8.93,6.25 9.10,5.70 8.64,5.35 9.21,5.34" fill="#ffde00"/><polygon points="8.00,6.40 8.19,6.94 8.76,6.95 8.30,7.30 8.47,7.85 8.00,7.52 7.53,7.85 7.70,7.30 7.24,6.95 7.81,6.94" fill="#ffde00"/></svg></div>
<div class="flag" style="left:114.3px;top:267.9px"><svg viewBox="0 0 24 16" preserveAspectRatio="none"><svg x="0" y="0" width="24" height="16" viewBox="0 0 60 30" preserveAspectRatio="none"><rect width="60" height="30" fill="#012169"/><path d="M0,0 60,30M60,0 0,30" stroke="#fff" stroke-width="6"/><path d="M0,0 60,30M60,0 0,30" stroke="#c8102e" stroke-width="2.4"/><path d="M30,0v30M0,15h60" stroke="#fff" stroke-width="10"/><path d="M30,0v30M0,15h60" stroke="#c8102e" stroke-width="6"/></svg></svg></div>
<div class="flag" style="left:114.3px;top:295.1px"><svg viewBox="0 0 24 16" preserveAspectRatio="none"><rect width="24" height="16" fill="#2b2f77"/><svg x="0" y="0" width="12" height="8" viewBox="0 0 60 30" preserveAspectRatio="none"><rect width="60" height="30" fill="#012169"/><path d="M0,0 60,30M60,0 0,30" stroke="#fff" stroke-width="6"/><path d="M0,0 60,30M60,0 0,30" stroke="#c8102e" stroke-width="2.4"/><path d="M30,0v30M0,15h60" stroke="#fff" stroke-width="10"/><path d="M30,0v30M0,15h60" stroke="#c8102e" stroke-width="6"/></svg><polygon points="6.00,10.10 6.56,11.23 7.81,11.41 6.90,12.29 7.12,13.54 6.00,12.95 4.88,13.54 5.10,12.29 4.19,11.41 5.44,11.23" fill="#fff"/><polygon points="18.00,12.20 18.29,12.80 18.95,12.89 18.48,13.35 18.59,14.01 18.00,13.70 17.41,14.01 17.52,13.35 17.05,12.89 17.71,12.80" fill="#fff"/><polygon points="18.00,2.00 18.29,2.60 18.95,2.69 18.48,3.15 18.59,3.81 18.00,3.50 17.41,3.81 17.52,3.15 17.05,2.69 17.71,2.60" fill="#fff"/><polygon points="15.00,6.60 15.29,7.20 15.95,7.29 15.48,7.75 15.59,8.41 15.00,8.10 14.41,8.41 14.52,7.75 14.05,7.29 14.71,7.20" fill="#fff"/><polygon points="21.00,5.40 21.29,6.00 21.95,6.09 21.48,6.55 21.59,7.21 21.00,6.90 20.41,7.21 20.52,6.55 20.05,6.09 20.71,6.00" fill="#fff"/><polygon points="19.60,8.80 19.74,9.21 20.17,9.21 19.83,9.47 19.95,9.89 19.60,9.64 19.25,9.89 19.37,9.47 19.03,9.21 19.46,9.21" fill="#fff"/></svg></div>
<div class="flag" style="left:114.3px;top:322.3px"><svg viewBox="0 0 24 16" preserveAspectRatio="none"><rect width="8" height="16" fill="#1e9a4c"/><rect x="8" width="8" height="16" fill="#ffffff"/><rect x="16" width="8" height="16" fill="#e8242e"/><rect x=".25" y=".25" width="23.5" height="15.5" fill="none" stroke="#c9c9c9" stroke-width=".5"/></svg></div>
<div class="flag" style="left:114.3px;top:349.5px"><svg viewBox="0 0 24 16" preserveAspectRatio="none"><rect width="24" height="16" fill="#fff"/><g transform="rotate(33.7 12 8)"><path d="M8,8 a4,4 0 0 1 8,0z" fill="#cd2e3a"/><path d="M8,8 a4,4 0 0 0 8,0z" fill="#0047a0"/><circle cx="10" cy="8" r="2" fill="#cd2e3a"/><circle cx="14" cy="8" r="2" fill="#0047a0"/></g><g transform="rotate(-56 5 3.6)" stroke="#222" stroke-width=".75"><path d="M3.1,2.5h3.8M3.1,3.6h3.8M3.1,4.7h3.8"/></g><g transform="rotate(-56 19 12.4)" stroke="#222" stroke-width=".75"><path d="M17.1,11.3h3.8M17.1,12.4h3.8M17.1,13.5h3.8"/></g><g transform="rotate(56 19 3.6)" stroke="#222" stroke-width=".75"><path d="M17.1,2.5h3.8M17.1,3.6h3.8M17.1,4.7h3.8"/></g><g transform="rotate(56 5 12.4)" stroke="#222" stroke-width=".75"><path d="M3.1,11.3h3.8M3.1,12.4h3.8M3.1,13.5h3.8"/></g><rect x=".25" y=".25" width="23.5" height="15.5" fill="none" stroke="#c9c9c9" stroke-width=".5"/></svg></div>
<div class="flag" style="left:114.3px;top:376.7px"><svg viewBox="0 0 24 16" preserveAspectRatio="none"><rect width="24" height="16" fill="#fff"/><circle cx="12" cy="8" r="4.7" fill="#e8242e"/><rect x=".25" y=".25" width="23.5" height="15.5" fill="none" stroke="#c9c9c9" stroke-width=".5"/></svg></div>
<div class="flag" style="left:114.3px;top:403.9px"><svg viewBox="0 0 24 16" preserveAspectRatio="none"><rect width="24" height="5.33" fill="#1a1a1a"/><rect y="5.33" width="24" height="5.33" fill="#dd2c20"/><rect y="10.67" width="24" height="5.33" fill="#ffd21a"/></svg></div>
<div class="flag" style="left:114.3px;top:431.1px"><svg viewBox="0 0 24 16" preserveAspectRatio="none"><rect width="24" height="16" fill="#fff"/><rect width="6" height="16" fill="#e8242e"/><rect x="18" width="6" height="16" fill="#e8242e"/><path d="M12,3.2 l1,1.9 1.1,-.5 -.5,2.6 1.3,-1.2 .3,.8 1.7,-.3 -.7,1.9 .6,.4 -2.6,2 .3,1 -2.2,-.3 v2 h-.6 v-2 l-2.2,.3 .3,-1 -2.6,-2 .6,-.4 -.7,-1.9 1.7,.3 .3,-.8 1.3,1.2 -.5,-2.6 1.1,.5z" fill="#e8242e"/><rect x=".25" y=".25" width="23.5" height="15.5" fill="none" stroke="#d9a0a0" stroke-width=".5"/></svg></div>
<div class="flag" style="left:114.3px;top:458.3px"><svg viewBox="0 0 24 16" preserveAspectRatio="none"><rect width="24" height="5.33" fill="#e8452a"/><rect y="5.33" width="24" height="5.33" fill="#ffffff"/><rect y="10.67" width="24" height="5.33" fill="#2550a8"/><rect x=".25" y=".25" width="23.5" height="15.5" fill="none" stroke="#c9c9c9" stroke-width=".5"/></svg></div>
<div class="flag" style="left:114.3px;top:485.5px"><svg viewBox="0 0 24 16" preserveAspectRatio="none"><rect width="24" height="16" fill="#1e9a3c"/><path d="M12,2 21.4,8 12,14 2.6,8z" fill="#fedd00"/><circle cx="12" cy="8" r="3.5" fill="#2b3a8c"/><path d="M8.7,7.2 q3.4,-.9 6.6,1.7" fill="none" stroke="#fff" stroke-width=".55"/></svg></div>
<div class="flag" style="left:114.3px;top:512.7px"><svg viewBox="0 0 24 16" preserveAspectRatio="none"><rect width="24" height="16" fill="#2b2f77"/><svg x="0" y="0" width="12" height="8" viewBox="0 0 60 30" preserveAspectRatio="none"><rect width="60" height="30" fill="#012169"/><path d="M0,0 60,30M60,0 0,30" stroke="#fff" stroke-width="6"/><path d="M0,0 60,30M60,0 0,30" stroke="#c8102e" stroke-width="2.4"/><path d="M30,0v30M0,15h60" stroke="#fff" stroke-width="10"/><path d="M30,0v30M0,15h60" stroke="#c8102e" stroke-width="6"/></svg><polygon points="18.00,2.30 18.26,3.04 19.05,3.06 18.42,3.54 18.65,4.29 18.00,3.84 17.35,4.29 17.58,3.54 16.95,3.06 17.74,3.04" fill="#d8343c"/><polygon points="15.60,6.60 15.84,7.28 16.55,7.29 15.98,7.72 16.19,8.41 15.60,8.00 15.01,8.41 15.22,7.72 14.65,7.29 15.36,7.28" fill="#d8343c"/><polygon points="20.60,5.80 20.84,6.48 21.55,6.49 20.98,6.92 21.19,7.61 20.60,7.20 20.01,7.61 20.22,6.92 19.65,6.49 20.36,6.48" fill="#d8343c"/><polygon points="18.00,11.40 18.28,12.21 19.14,12.23 18.46,12.75 18.71,13.57 18.00,13.08 17.29,13.57 17.54,12.75 16.86,12.23 17.72,12.21" fill="#d8343c"/></svg></div>
<div class="flag" style="left:114.3px;top:539.9px"><svg viewBox="0 0 24 16" preserveAspectRatio="none"><rect width="24" height="16" fill="#fff"/><rect y="1.9" width="24" height="2.2" fill="#2c5bc0"/><rect y="11.9" width="24" height="2.2" fill="#2c5bc0"/><path d="M12,5.2 14.3,9.2 9.7,9.2z M12,10.8 9.7,6.8 14.3,6.8z" fill="none" stroke="#2c5bc0" stroke-width=".65"/><rect x=".25" y=".25" width="23.5" height="15.5" fill="none" stroke="#b9bcc8" stroke-width=".5"/></svg></div>
<div class="flag" style="left:114.3px;top:567.1px"><svg viewBox="0 0 24 16" preserveAspectRatio="none"><rect width="8" height="16" fill="#1f2f8a"/><rect x="8" width="8" height="16" fill="#fcd116"/><rect x="16" width="8" height="16" fill="#ce1126"/></svg></div>
<div class="flag" style="left:114.3px;top:594.3px"><svg viewBox="0 0 24 16" preserveAspectRatio="none"><rect width="24" height="16" fill="#1f6fb0"/><rect x="7" width="3.2" height="16" fill="#fecc00"/><rect y="6.4" width="24" height="3.2" fill="#fecc00"/></svg></div>
<div class="flag" style="left:114.3px;top:621.5px"><svg viewBox="0 0 24 16" preserveAspectRatio="none"><rect width="24" height="16" fill="none"/><g transform="translate(0,1.2)"><rect width="24" height="4.53" fill="#d6273c"/><rect y="4.53" width="24" height="4.53" fill="#ffffff"/><rect y="9.07" width="24" height="4.53" fill="#3f8a56"/></g></svg></div>
<div class="flag" style="left:114.3px;top:648.7px"><svg viewBox="0 0 24 16" preserveAspectRatio="none"><rect width="24" height="16" fill="#fff"/><rect x="10.4" width="3.2" height="16" fill="#e8242e"/><rect y="6.4" width="24" height="3.2" fill="#e8242e"/><path d="M3.9000000000000004,3.2h2.6M5.2,1.9000000000000001v2.6" stroke="#e8242e" stroke-width=".9"/><path d="M17.5,3.2h2.6M18.8,1.9000000000000001v2.6" stroke="#e8242e" stroke-width=".9"/><path d="M3.9000000000000004,12.8h2.6M5.2,11.5v2.6" stroke="#e8242e" stroke-width=".9"/><path d="M17.5,12.8h2.6M18.8,11.5v2.6" stroke="#e8242e" stroke-width=".9"/><rect x=".25" y=".25" width="23.5" height="15.5" fill="none" stroke="#c9c9c9" stroke-width=".5"/></svg></div>
<div class="flag" style="left:114.3px;top:675.9px"><svg viewBox="0 0 24 16" preserveAspectRatio="none"><rect width="24" height="16" fill="#2b4fa8"/><rect y="2.6" width="24" height="10.8" fill="#fff"/><rect y="3.3" width="24" height="9.4" fill="#ed1c27"/><circle cx="8" cy="8" r="3.1" fill="#fff"/><polygon points="8.00,5.10 8.68,7.06 10.76,7.10 9.10,8.36 9.70,10.35 8.00,9.16 6.30,10.35 6.90,8.36 5.24,7.10 7.32,7.06" fill="#ed1c27"/></svg></div>
<div class="flag" style="left:114.3px;top:703.1px"><svg viewBox="0 0 24 16" preserveAspectRatio="none"><rect width="8" height="16" fill="#1c7a4e"/><rect x="8" width="8" height="16" fill="#ffffff"/><rect x="16" width="8" height="16" fill="#ce1126"/><ellipse cx="12" cy="8" rx="2" ry="2.2" fill="#8a6a3a"/><path d="M10.2,9.6 q1.8,1.6 3.6,0" stroke="#4c8a3c" stroke-width=".7" fill="none"/><rect x=".25" y=".25" width="23.5" height="15.5" fill="none" stroke="#c9c9c9" stroke-width=".5"/></svg></div>
<div class="flag" style="left:114.3px;top:730.3px"><svg viewBox="0 0 24 16" preserveAspectRatio="none"><rect width="24" height="16" fill="#c8202c"/><rect y="4" width="24" height="8" fill="#fcc315"/><rect x="6.4" y="5.8" width="3" height="4.2" rx=".8" fill="#b5442c"/><rect x="7.2" y="6.6" width="1.4" height="2" fill="#d8a838"/></svg></div>
<div class="flag" style="left:114.3px;top:757.5px"><svg viewBox="0 0 24 16" preserveAspectRatio="none"><rect width="24" height="16" fill="#da2c32"/><path d="M10.2,3.4h3.6v2.9h4.4v3.4h-4.4v2.9h-3.6v-2.9h-4.4v-3.4h4.4z" fill="#fff"/></svg></div>
<div class="flag" style="left:114.3px;top:784.7px"><svg viewBox="0 0 24 16" preserveAspectRatio="none"><rect width="24" height="16" fill="#fff"/><rect y="0.00" width="24" height="1.78" fill="#2a63b8"/><rect y="3.56" width="24" height="1.78" fill="#2a63b8"/><rect y="7.11" width="24" height="1.78" fill="#2a63b8"/><rect y="10.67" width="24" height="1.78" fill="#2a63b8"/><rect y="14.22" width="24" height="1.78" fill="#2a63b8"/><rect width="8.9" height="8.9" fill="#2a63b8"/><path d="M4.45,0v8.9M0,4.45h8.9" stroke="#fff" stroke-width="1.7"/><rect x=".25" y=".25" width="23.5" height="15.5" fill="none" stroke="#8aa0c8" stroke-width=".5"/></svg></div>
<div class="flag" style="left:114.3px;top:811.9px"><svg viewBox="0 0 24 16" preserveAspectRatio="none"><g transform="translate(0,2)"><rect width="24" height="4.00" fill="#ee1c25"/><rect y="4.00" width="24" height="4.00" fill="#ffffff"/><rect y="8.00" width="24" height="4.00" fill="#1f3a93"/><path d="M10,2.6h4v4.2q0,1.8 -2,2.3q-2,-.5 -2,-2.3z" fill="#e8545c"/><path d="M10,2.6h4v-1.2h-4z" fill="#4a6ac0"/></g></svg></div>
<div class="flag" style="left:114.3px;top:839.1px"><svg viewBox="0 0 24 16" preserveAspectRatio="none"><rect width="24" height="16" fill="#fff"/><rect width="24" height="5.2" fill="#e03c31"/><rect y="10.8" width="24" height="5.2" fill="#2b2f80"/><path d="M0,0 l10.4,8 L0,16z" fill="#fff"/><path d="M0,0 h3.4 l8.6,6.3 h12 v3.4 h-12 l-8.6,6.3 H0 v-3.2 l6.2,-4.8 L0,3.2z" fill="#1f8a5a"/><path d="M0,2.2 l7.6,5.8 L0,13.8z" fill="#f2b91a"/><path d="M0,3.6 l5.8,4.4 L0,12.4z" fill="#1a1a1a"/></svg></div>
<div class="flag" style="left:114.3px;top:866.3px"><svg viewBox="0 0 24 16" preserveAspectRatio="none"><rect width="24" height="16" fill="#27b1c6"/><circle cx="13" cy="6.8" r="2.5" fill="#f6d63a"/><path d="M8.6,9.4 q4.4,3.6 8.8,0 q-4.4,2 -8.8,0z" fill="#f6d63a"/><path d="M2,1.2v13.6" stroke="#f6d63a" stroke-width="1.1" stroke-dasharray="1.1 .6"/></svg></div>
<div class="flag" style="left:114.3px;top:893.5px"><svg viewBox="0 0 24 16" preserveAspectRatio="none"><rect width="24" height="8" fill="#fff"/><rect y="8" width="24" height="8" fill="#dc2440"/><rect x=".25" y=".25" width="23.5" height="15.5" fill="none" stroke="#9a9a9a" stroke-width=".5"/></svg></div>
<div class="flag" style="left:114.3px;top:920.7px"><svg viewBox="0 0 24 16" preserveAspectRatio="none"><rect width="24" height="8" fill="#1f5fc0"/><rect y="8" width="24" height="8" fill="#ffd500"/><rect x=".25" y=".25" width="23.5" height="15.5" fill="none" stroke="#a89a50" stroke-width=".5"/></svg></div>
<div class="flag" style="left:114.3px;top:947.9px"><svg viewBox="0 0 24 16" preserveAspectRatio="none"><rect width="24" height="16" fill="#2c4ea8"/><path d="M9.2,7.6 l2,-1.2 2.2,.2 1.6,1.6 -.6,2.2 -1.6,.6 -.8,2 -1.6,-1 -.4,-2.2z" fill="#d0a650"/><polygon points="7.40,4.40 7.54,4.81 7.97,4.81 7.63,5.07 7.75,5.49 7.40,5.24 7.05,5.49 7.17,5.07 6.83,4.81 7.26,4.81" fill="#fff"/><polygon points="9.20,3.40 9.34,3.81 9.77,3.81 9.43,4.07 9.55,4.49 9.20,4.24 8.85,4.49 8.97,4.07 8.63,3.81 9.06,3.81" fill="#fff"/><polygon points="11.10,2.90 11.24,3.31 11.67,3.31 11.33,3.57 11.45,3.99 11.10,3.74 10.75,3.99 10.87,3.57 10.53,3.31 10.96,3.31" fill="#fff"/><polygon points="12.90,2.90 13.04,3.31 13.47,3.31 13.13,3.57 13.25,3.99 12.90,3.74 12.55,3.99 12.67,3.57 12.33,3.31 12.76,3.31" fill="#fff"/><polygon points="14.80,3.40 14.94,3.81 15.37,3.81 15.03,4.07 15.15,4.49 14.80,4.24 14.45,4.49 14.57,4.07 14.23,3.81 14.66,3.81" fill="#fff"/><polygon points="16.60,4.40 16.74,4.81 17.17,4.81 16.83,5.07 16.95,5.49 16.60,5.24 16.25,5.49 16.37,5.07 16.03,4.81 16.46,4.81" fill="#fff"/></svg></div>
<div class="flag" style="left:114.3px;top:975.1px"><svg viewBox="0 0 24 16" preserveAspectRatio="none"><rect width="24" height="16" fill="#e3262e"/><circle cx="9" cy="8" r="4" fill="#fff"/><circle cx="10" cy="8" r="3.2" fill="#e3262e"/><polygon points="15.12,7.51 14.21,8.20 14.54,9.29 13.60,8.64 12.66,9.29 12.99,8.20 12.08,7.51 13.22,7.48 13.60,6.40 13.98,7.48" fill="#fff"/></svg></div>
<svg id="chart" style="left:489.0px;top:147.0px" width="743.9" height="461.5" viewBox="489.0 322.0 743.9 461.5">
<defs><clipPath id="mc"><rect x="490.0" y="323.0" width="741.9" height="459.5"/></clipPath><linearGradient id="lg" x1="0" x2="1" y1="0" y2="0"><stop offset="0" stop-color="#7f6000"/><stop offset=".5" stop-color="#b7b7b7"/><stop offset="1" stop-color="#f1c232"/></linearGradient></defs>
<rect x="490.0" y="323.0" width="741.9" height="459.5" fill="#9fc5e8"/>
<g clip-path="url(#mc)" stroke-linejoin="round">
<path d="M683.1,620.3 685.5,615.6 686.2,616.4 690.9,617.1 695.6,618.7 696.4,621.8 694.0,624.9 697.1,629.6 700.3,630.4 704.9,632.7 707.3,635.9 703.4,633.5 699.5,633.5 695.6,631.2 691.7,626.5 687.8,623.4 683.9,622.6Z" fill="#ffffff" stroke="#eef1f4" stroke-width=".5"/>
<path d="M692.5,603.9 698.7,602.3 706.5,605.5 713.5,608.6 719.0,611.7 716.6,614.0 710.4,611.7 703.4,607.8 695.6,605.5Z" fill="#ffffff" stroke="#eef1f4" stroke-width=".5"/>
<path d="M706.5,600.0 711.2,600.8 713.5,604.7 715.1,607.0 713.5,607.0 711.2,603.9 707.3,601.6Z" fill="#ffffff" stroke="#eef1f4" stroke-width=".5"/>
<path d="M716.6,609.4 719.3,609.0 719.0,614.8 717.1,614.0Z" fill="#ffffff" stroke="#eef1f4" stroke-width=".5"/>
<path d="M727.6,612.2 731.1,612.2 730.7,613.7 727.6,613.7Z" fill="#ffffff" stroke="#eef1f4" stroke-width=".5"/>
<path d="M745.0,348.6 740.5,354.0 736.0,360.3 734.2,366.6 727.9,370.2 724.3,377.4 720.7,384.6 716.2,390.0 717.1,397.2 720.7,404.4 726.1,411.6 733.3,413.4 740.5,411.6 745.0,415.2 746.2,420.0 747.4,425.7 750.8,432.6 750.3,443.0 753.1,448.7 752.0,455.6 754.9,459.0 753.1,468.2 757.1,477.4 760.6,488.9 765.2,498.1 773.8,500.4 778.2,488.0 781.8,479.9 789.0,474.5 798.0,465.5 807.0,460.1 816.9,452.9 819.6,443.9 818.7,434.9 821.4,426.0 826.8,420.6 823.2,408.0 825.0,397.2 821.4,390.0 823.2,381.0 827.7,372.0 833.1,364.8 838.5,356.7 830.4,351.3 817.8,348.6 807.0,346.8 816.9,341.4 816.0,336.0 807.0,327.0 796.2,324.8 781.8,326.1 771.0,331.5 763.8,336.0 753.0,343.2 742.2,348.6 735.0,363.0Z" fill="#ffffff" stroke="#eef1f4" stroke-width=".5"/>
<path d="M812.4,474.5 816.9,472.4 823.2,474.2 828.6,471.8 834.0,475.4 834.9,479.0 828.6,484.4 823.2,487.1 816.9,484.4 814.2,479.0Z" fill="#ffffff" stroke="#eef1f4" stroke-width=".5"/>
<path d="M842.6,447.9 845.1,446.5 845.8,447.5 843.3,449.3Z" fill="#ffffff" stroke="#eef1f4" stroke-width=".5"/>
<path d="M704.9,632.7 708.8,628.1 715.9,625.7 720.5,624.2 722.9,627.3 729.9,628.8 735.3,628.1 740.0,627.3 741.6,632.7 747.0,636.6 753.3,637.4 758.0,639.8 760.3,641.3 762.6,646.8 772.0,650.7 773.5,653.0 781.3,653.8 789.1,657.7 791.9,663.1 791.0,669.4 787.6,674.1 784.5,679.5 783.7,687.3 779.8,695.1 772.8,697.4 765.7,701.3 764.2,709.1 759.5,715.4 755.6,719.3 753.3,722.4 748.6,723.2 748.6,727.8 744.7,731.0 739.2,732.5 737.7,738.0 733.0,741.1 733.8,743.4 729.9,747.3 729.1,750.5 726.0,752.0 724.4,755.9 723.7,766.8 726.8,771.5 731.4,777.0 734.6,778.5 726.8,781.6 722.1,779.3 716.6,775.4 713.5,769.9 713.5,763.7 712.7,752.8 713.5,743.4 715.1,735.6 715.1,727.8 716.6,718.5 719.0,709.1 720.5,699.8 722.1,692.0 722.9,685.7 719.8,683.4 714.3,679.5 709.6,674.8 705.7,668.6 701.0,662.4 699.5,656.1 701.8,649.9 704.9,645.2 708.1,640.5 707.3,635.9Z" fill="#ffffff" stroke="#eef1f4" stroke-width=".5"/>
<path d="M739.5,766.6 746.7,767.5 743.1,770.8Z" fill="#ffffff" stroke="#eef1f4" stroke-width=".5"/>
<path d="M785.0,775.1 789.9,777.4 789.0,778.3 784.7,776.2Z" fill="#ffffff" stroke="#eef1f4" stroke-width=".5"/>
<path d="M500.8,681.7 503.7,681.2 504.8,683.0 501.2,683.3Z" fill="#ffffff" stroke="#eef1f4" stroke-width=".5"/>
<path d="M517.9,675.4 521.0,676.5 520.6,677.6 518.1,676.9Z" fill="#ffffff" stroke="#eef1f4" stroke-width=".5"/>
<path d="M563.4,683.9 565.2,683.9 565.2,685.3 563.4,685.3Z" fill="#ffffff" stroke="#eef1f4" stroke-width=".5"/>
<path d="M678.8,648.8 680.2,649.5 680.8,651.3 679.3,650.6Z" fill="#ffffff" stroke="#eef1f4" stroke-width=".5"/>
<path d="M876.2,488.0 884.3,476.3 889.7,463.7 896.9,454.7 905.9,448.4 914.9,446.6 922.1,451.1 925.7,454.7 932.9,458.3 941.9,464.6 942.8,469.1 938.3,474.5 932.0,476.3 929.3,480.8 932.9,479.0 938.3,482.6 944.6,474.5 948.2,471.8 950.0,461.9 953.6,467.3 959.9,461.9 968.9,460.1 976.1,456.5 983.3,453.8 995.0,460.1 990.4,460.1 994.0,458.3 993.1,447.5 997.6,434.9 1001.2,431.7 1003.9,436.7 1004.8,452.9 1007.5,461.9 1008.4,467.7 1009.8,461.9 1008.2,447.5 1007.3,436.7 1009.3,433.1 1013.8,436.7 1018.3,433.1 1021.0,442.1 1026.4,445.7 1025.5,442.1 1021.0,433.1 1031.8,429.6 1030.9,421.5 1035.4,418.8 1044.4,414.3 1051.6,411.6 1057.0,411.6 1062.4,402.6 1066.9,398.1 1071.4,400.8 1075.0,406.2 1082.2,407.1 1086.7,411.6 1085.8,418.8 1078.6,426.0 1070.5,436.7 1078.6,430.5 1084.0,425.1 1086.7,431.4 1093.0,430.5 1100.1,433.1 1105.5,434.9 1104.6,429.6 1109.1,428.7 1114.5,432.2 1118.1,436.7 1119.0,445.7 1123.5,442.1 1128.9,443.9 1135.2,444.8 1137.9,440.3 1140.6,435.8 1146.9,437.6 1152.3,440.3 1158.6,442.1 1163.1,447.5 1172.1,447.5 1178.4,450.2 1180.2,454.7 1186.5,455.6 1193.7,454.7 1198.2,452.9 1206.3,452.9 1213.5,455.6 1222.5,461.9 1236.9,470.9 1236.9,474.4 1220.7,478.0 1217.1,485.2 1216.2,490.6 1208.1,495.1 1202.7,498.7 1199.1,501.4 1191.9,500.5 1189.2,503.2 1185.6,507.7 1183.8,515.8 1179.3,523.0 1173.9,530.2 1168.5,535.6 1170.3,526.6 1169.4,517.6 1171.2,510.4 1175.7,506.8 1181.1,501.4 1182.9,503.2 1184.7,496.9 1188.3,491.5 1182.9,491.5 1178.4,495.1 1179.3,497.8 1173.9,495.1 1168.5,501.4 1164.9,505.0 1157.7,503.2 1150.5,505.0 1143.3,505.0 1137.9,509.5 1132.5,515.8 1129.8,519.4 1134.3,518.5 1139.7,523.0 1141.5,528.4 1139.7,533.8 1137.0,539.2 1132.5,545.5 1128.9,550.0 1123.5,555.4 1119.9,556.3 1117.2,562.6 1113.6,566.2 1114.5,568.0 1117.2,570.7 1118.1,575.2 1115.4,576.6 1111.8,577.9 1110.9,573.4 1110.9,568.9 1108.8,566.2 1107.3,562.6 1102.8,561.7 1098.4,565.3 1096.6,568.0 1101.9,569.8 1103.7,572.5 1097.5,575.2 1098.4,580.6 1102.8,584.2 1102.8,588.7 1100.1,594.9 1095.7,599.4 1091.2,603.0 1085.8,604.8 1081.3,606.6 1081.0,606.6 1077.6,606.0 1076.5,607.1 1073.8,610.4 1072.1,613.8 1075.4,617.6 1077.6,621.5 1078.2,625.9 1075.4,628.2 1072.1,630.4 1068.8,633.1 1067.7,629.8 1064.4,625.9 1062.1,623.7 1061.0,625.9 1058.8,624.3 1058.3,628.2 1058.8,631.5 1061.0,634.8 1063.8,637.6 1066.0,640.3 1067.1,645.3 1064.9,644.8 1062.1,641.4 1059.4,637.6 1056.6,633.7 1055.5,630.4 1055.5,625.9 1054.9,621.5 1052.7,618.2 1051.1,616.0 1050.5,618.2 1047.8,617.6 1046.6,612.6 1045.0,608.2 1043.3,604.9 1042.9,603.7 1039.0,604.8 1035.2,606.4 1032.9,609.2 1029.1,612.0 1024.1,616.4 1021.3,619.7 1020.2,624.2 1018.5,628.6 1016.3,632.5 1014.7,633.6 1011.9,629.7 1009.1,623.0 1006.4,616.4 1004.7,609.8 1004.2,607.0 1001.9,607.8 1002.5,605.3 999.7,603.1 996.4,602.2 993.1,597.0 988.7,598.1 982.0,598.1 977.6,598.1 973.8,596.5 972.0,597.8 973.2,600.3 975.4,600.9 978.1,602.6 979.8,604.2 977.0,607.5 974.3,610.9 970.4,614.2 966.5,616.4 964.3,618.1 958.8,621.9 953.2,624.7 949.0,626.9 947.7,624.2 944.4,617.5 940.5,610.9 937.2,604.8 933.8,598.1 931.1,592.9 930.2,586.0 930.5,582.6 931.1,573.2 950.1,570.8 945.7,570.2 940.2,571.3 934.6,571.9 932.4,573.5 929.1,572.4 924.7,573.0 920.2,573.0 917.5,571.3 914.7,569.1 913.6,565.8 913.6,562.5 916.4,561.4 914.7,559.7 911.4,560.8 909.2,561.4 910.3,563.6 908.0,564.1 909.2,566.9 907.5,570.2 905.8,571.9 904.2,571.3 902.5,567.5 901.4,565.2 900.3,563.6 898.6,562.5 898.6,559.2 895.9,558.0 891.4,554.2 888.7,551.4 887.6,548.6 884.8,549.7 885.9,552.5 889.8,556.4 893.7,560.3 897.0,562.5 897.5,563.6 894.8,563.6 893.1,562.5 893.7,565.8 895.3,567.5 893.7,570.2 892.0,568.0 890.9,564.7 887.6,560.8 883.7,557.5 880.4,554.2 877.6,553.1 875.4,554.7 871.5,555.3 867.6,554.7 867.6,558.0 864.9,560.8 862.1,563.6 861.5,566.9 858.2,570.2 854.3,571.3 851.6,572.4 848.3,571.9 846.6,569.7 843.3,570.2 842.2,566.9 843.3,562.5 844.4,556.9 843.3,554.2 847.1,553.1 852.7,553.6 857.7,555.3 858.2,550.3 857.7,545.9 855.5,543.1 852.1,542.0 851.0,540.3 854.3,539.2 857.1,539.8 858.2,536.5 861.0,537.0 863.2,534.2 866.5,532.0 867.6,531.5 868.7,528.2 870.4,525.9 873.7,524.8 875.4,525.4 877.6,523.7 878.2,520.4 877.6,513.8 879.3,510.4 882.0,509.3 882.0,513.2 883.7,514.9 884.8,517.6 885.3,521.0 888.7,519.8 889.8,520.4 895.9,519.3 899.2,520.4 901.4,519.8 902.5,518.2 903.1,513.2 904.7,512.1 906.9,512.6 907.5,509.3 905.8,508.2 906.4,504.9 909.2,503.6 913.6,502.7 918.6,501.0 917.5,500.2 912.5,501.6 907.5,501.6 904.2,498.8 902.5,494.4 903.1,489.4 905.3,483.9 907.5,479.4 909.2,476.1 909.2,475.0 888.7,475.0 887.6,475.0 886.5,481.6 884.8,486.1 885.3,491.6 885.3,497.1 884.2,501.6 883.1,504.9 880.4,506.6 877.0,508.2 874.3,508.2 871.5,503.8 871.0,498.3 870.4,492.7 873.7,489.4 877.0,486.1 881.5,481.6 884.8,478.3 886.5,475.6Z" fill="#ffffff" stroke="#eef1f4" stroke-width=".5"/>
<path d="M826.3,606.0 828.4,600.5 831.9,595.6 836.7,591.4 840.9,585.1 845.8,578.1 849.3,573.3 852.8,572.6 857.7,573.9 864.6,572.6 871.6,571.9 877.2,571.2 880.7,570.5 882.8,573.9 881.4,578.1 885.6,580.9 891.1,582.3 898.1,585.8 900.9,583.7 903.7,580.9 909.3,581.6 914.9,583.7 920.4,585.1 926.0,584.4 929.5,583.0 930.2,587.9 930.5,592.4 933.3,599.3 936.1,606.3 940.2,614.7 944.4,621.7 947.9,626.5 950.0,628.6 953.9,627.0 959.5,625.6 963.0,627.7 959.5,633.9 953.9,642.3 948.3,649.3 943.4,656.2 940.0,660.4 939.3,666.0 941.4,671.6 942.1,678.6 938.6,684.1 933.0,689.7 930.9,693.9 931.6,698.1 927.4,701.6 923.9,707.9 919.7,714.8 914.9,719.7 906.5,721.8 900.2,722.5 897.4,720.4 896.0,714.8 893.9,710.0 892.5,706.5 889.7,699.5 887.0,691.1 884.2,684.1 884.9,677.2 887.0,670.2 885.6,661.8 882.1,656.2 878.6,650.7 877.9,645.1 878.6,641.6 875.1,640.2 871.6,639.5 866.0,638.1 860.5,638.8 853.5,640.2 846.5,640.9 840.9,636.0 835.3,630.4 829.8,625.6 826.3,620.0 827.0,613.0Z" fill="#ffffff" stroke="#eef1f4" stroke-width=".5"/>
<path d="M958.8,672.3 961.6,678.6 959.5,685.5 957.4,693.9 954.6,700.2 949.0,700.9 946.2,693.9 948.3,685.5 952.5,680.7 956.0,675.8Z" fill="#ffffff" stroke="#eef1f4" stroke-width=".5"/>
<path d="M946.2,671.3 947.6,671.3 947.6,672.7 946.2,672.7Z" fill="#ffffff" stroke="#eef1f4" stroke-width=".5"/>
<path d="M970.1,690.8 971.5,690.8 971.5,692.2 970.1,692.2Z" fill="#ffffff" stroke="#eef1f4" stroke-width=".5"/>
<path d="M966.5,623.9 968.1,623.9 968.1,625.0 966.5,625.0Z" fill="#ffffff" stroke="#eef1f4" stroke-width=".5"/>
<path d="M803.7,566.5 805.5,566.5 805.5,568.0 803.7,568.0Z" fill="#ffffff" stroke="#eef1f4" stroke-width=".5"/>
<path d="M809.1,568.3 811.3,568.3 811.3,569.8 809.1,569.8Z" fill="#ffffff" stroke="#eef1f4" stroke-width=".5"/>
<path d="M826.4,580.2 828.2,580.2 828.2,581.6 826.4,581.6Z" fill="#ffffff" stroke="#eef1f4" stroke-width=".5"/>
<path d="M966.5,623.9 968.3,624.2 968.1,625.0 966.5,624.8Z" fill="#ffffff" stroke="#eef1f4" stroke-width=".5"/>
<path d="M846.6,491.6 847.7,491.6 847.7,495.5 846.6,494.9Z" fill="#ffffff" stroke="#eef1f4" stroke-width=".5"/>
<path d="M924.4,574.9 928.3,573.8 930.5,573.2 927.8,576.0 925.0,576.5Z" fill="#ffffff" stroke="#eef1f4" stroke-width=".5"/>
<path d="M1019.1,630.2 1021.9,629.7 1023.5,634.1 1021.3,638.0 1019.1,635.2Z" fill="#ffffff" stroke="#eef1f4" stroke-width=".5"/>
<path d="M1143.3,522.1 1145.1,526.6 1146.9,535.6 1147.8,539.2 1144.2,540.1 1143.3,547.3 1141.5,546.4 1142.4,537.4 1142.4,530.2Z" fill="#ffffff" stroke="#eef1f4" stroke-width=".5"/>
<path d="M1149.6,552.7 1162.2,544.2 1163.1,544.9 1150.5,553.9Z" fill="#ffffff" stroke="#eef1f4" stroke-width=".5"/>
<path d="M1189.2,517.9 1194.1,519.7 1193.7,521.2 1189.2,519.4Z" fill="#ffffff" stroke="#eef1f4" stroke-width=".5"/>
<path d="M1048.9,637.6 1052.2,637.9 1056.6,641.4 1061.0,645.9 1066.0,650.3 1069.9,652.5 1073.2,654.2 1072.1,659.2 1069.3,660.3 1065.5,656.9 1061.0,652.5 1056.6,648.1 1052.2,642.5Z" fill="#ffffff" stroke="#eef1f4" stroke-width=".5"/>
<path d="M1069.0,661.9 1072.1,660.3 1077.6,661.4 1084.3,662.7 1089.8,664.7 1097.6,665.2 1102.0,666.9 1100.9,669.7 1095.4,668.0 1087.6,666.9 1079.9,665.2 1073.2,664.1Z" fill="#ffffff" stroke="#eef1f4" stroke-width=".5"/>
<path d="M1104.2,670.8 1108.7,665.8 1112.5,664.1 1113.1,666.4 1108.7,669.1 1105.3,671.3Z" fill="#ffffff" stroke="#eef1f4" stroke-width=".5"/>
<path d="M1076.5,647.0 1081.0,644.2 1085.4,641.4 1089.8,638.7 1093.2,635.3 1097.6,639.2 1095.4,642.0 1096.5,647.0 1094.3,651.4 1091.5,654.7 1090.4,657.5 1086.5,655.8 1082.6,655.3 1079.3,653.6 1077.1,650.3Z" fill="#ffffff" stroke="#eef1f4" stroke-width=".5"/>
<path d="M1096.5,651.4 1099.8,647.0 1105.3,645.9 1109.8,645.9 1109.2,647.5 1104.2,648.6 1102.0,651.4 1105.3,653.6 1104.8,661.4 1103.1,659.2 1102.0,656.9 1100.3,661.9 1098.1,660.3 1098.1,655.8Z" fill="#ffffff" stroke="#eef1f4" stroke-width=".5"/>
<path d="M1113.6,645.9 1116.4,643.7 1117.0,648.1 1115.3,651.4 1113.6,649.2Z" fill="#ffffff" stroke="#eef1f4" stroke-width=".5"/>
<path d="M1110.3,654.7 1117.5,654.2 1121.4,656.9 1117.5,656.4 1111.4,656.7Z" fill="#ffffff" stroke="#eef1f4" stroke-width=".5"/>
<path d="M1119.7,650.3 1125.3,649.2 1129.7,651.4 1135.2,651.4 1140.2,654.7 1146.3,656.4 1150.7,659.2 1157.4,659.7 1160.1,656.9 1159.6,653.8 1162.9,655.8 1165.1,658.0 1161.8,660.8 1157.4,662.5 1155.2,663.6 1158.5,666.9 1161.2,669.7 1157.4,670.0 1152.9,667.5 1149.6,664.7 1145.2,667.5 1139.7,668.0 1133.6,666.7 1136.3,663.6 1136.3,659.2 1130.8,656.9 1127.5,659.2 1124.2,656.9 1121.4,653.6Z" fill="#ffffff" stroke="#eef1f4" stroke-width=".5"/>
<path d="M1167.3,659.7 1172.9,663.6 1178.4,665.8 1183.4,670.2 1182.3,670.8 1177.3,667.5 1172.3,664.7 1167.3,660.8Z" fill="#ffffff" stroke="#eef1f4" stroke-width=".5"/>
<path d="M1121.4,663.0 1123.0,662.5 1122.8,664.5 1121.4,664.9Z" fill="#ffffff" stroke="#eef1f4" stroke-width=".5"/>
<path d="M1074.5,640.6 1075.9,640.6 1075.9,642.5 1074.5,642.5Z" fill="#ffffff" stroke="#eef1f4" stroke-width=".5"/>
<path d="M1191.0,678.5 1193.7,678.5 1194.6,682.1 1191.9,682.1Z" fill="#ffffff" stroke="#eef1f4" stroke-width=".5"/>
<path d="M1186.2,689.3 1191.9,693.8 1191.5,694.7 1185.6,690.5Z" fill="#ffffff" stroke="#eef1f4" stroke-width=".5"/>
<path d="M1211.7,683.9 1216.2,681.2 1218.5,683.0 1215.3,686.2 1212.6,685.1Z" fill="#ffffff" stroke="#eef1f4" stroke-width=".5"/>
<path d="M996.7,757.6 1000.8,760.7 997.2,763.0Z" fill="#ffffff" stroke="#eef1f4" stroke-width=".5"/>
<path d="M1005.9,771.7 1007.3,771.7 1007.3,773.1 1005.9,773.1Z" fill="#ffffff" stroke="#eef1f4" stroke-width=".5"/>
<path d="M881.6,378.3 887.9,375.6 894.2,376.5 896.9,370.2 903.2,369.3 910.4,370.2 915.8,372.0 914.9,378.3 907.7,382.8 901.4,381.9 899.6,385.5 904.1,389.1 909.5,397.2 905.9,403.5 901.4,399.9 897.8,394.5 895.1,400.8 896.0,408.0 892.4,408.9 887.9,399.0 883.4,390.0 880.7,385.5Z" fill="#ffffff" stroke="#eef1f4" stroke-width=".5"/>
<path d="M923.0,372.0 928.4,371.1 924.8,374.7Z" fill="#ffffff" stroke="#eef1f4" stroke-width=".5"/>
<path d="M913.1,387.3 922.1,386.0 916.7,389.1Z" fill="#ffffff" stroke="#eef1f4" stroke-width=".5"/>
<path d="M909.9,407.1 912.0,406.5 911.3,409.8Z" fill="#ffffff" stroke="#eef1f4" stroke-width=".5"/>
<path d="M897.3,424.5 899.1,424.5 899.1,426.0 897.3,426.0Z" fill="#ffffff" stroke="#eef1f4" stroke-width=".5"/>
<path d="M950.0,366.6 956.3,363.9 962.6,361.2 963.5,365.7 968.9,363.0 972.5,356.7 977.0,351.3 979.7,354.0 984.2,353.1 988.7,356.7 990.5,362.1 986.0,366.6 980.6,372.0 979.7,376.5 974.3,374.7 968.9,372.0 963.5,376.5 958.1,374.7 953.6,372.0Z" fill="#ffffff" stroke="#eef1f4" stroke-width=".5"/>
<path d="M986.9,409.8 979.7,413.4 974.3,420.6 969.8,429.6 963.5,442.1 966.2,447.5 972.5,451.1 977.0,450.2 972.5,442.1 973.4,434.9 977.0,427.8 982.4,420.6 988.7,416.1 992.2,415.2 998.5,409.8 997.6,405.8 992.2,410.1Z" fill="#ffffff" stroke="#eef1f4" stroke-width=".5"/>
<path d="M1039.0,360.3 1043.5,362.1 1047.1,360.3 1050.7,359.4 1055.2,365.7 1053.4,372.0 1058.8,374.7 1059.7,382.8 1057.9,388.2 1052.5,387.3 1048.0,383.7 1046.2,380.1 1041.7,381.0 1040.8,374.7 1044.4,372.0 1043.5,366.6Z" fill="#ffffff" stroke="#eef1f4" stroke-width=".5"/>
<path d="M1062.4,381.0 1066.9,383.7 1069.6,390.0 1065.1,393.6 1057.9,397.2 1060.6,388.2Z" fill="#ffffff" stroke="#eef1f4" stroke-width=".5"/>
<path d="M1071.4,390.9 1075.0,395.4 1073.2,395.7 1071.0,392.7Z" fill="#ffffff" stroke="#eef1f4" stroke-width=".5"/>
<path d="M1129.8,415.2 1134.3,411.6 1140.6,411.6 1147.8,416.1 1148.7,420.6 1143.3,422.4 1137.9,424.2 1133.4,420.6Z" fill="#ffffff" stroke="#eef1f4" stroke-width=".5"/>
<path d="M1150.5,416.1 1160.4,419.7 1157.7,423.3 1151.4,420.6Z" fill="#ffffff" stroke="#eef1f4" stroke-width=".5"/>
<path d="M1137.9,430.5 1143.3,428.7 1146.0,434.0 1138.8,433.1Z" fill="#ffffff" stroke="#eef1f4" stroke-width=".5"/>
<path d="M1215.3,446.6 1220.7,444.3 1223.9,446.6 1218.9,449.3Z" fill="#ffffff" stroke="#eef1f4" stroke-width=".5"/>
<path d="M985.0,363.0 990.4,360.3 990.4,364.8 985.0,367.5Z" fill="#ffffff" stroke="#eef1f4" stroke-width=".5"/>
<path d="M1017.4,364.4 1021.0,363.3 1021.3,364.8 1018.1,365.5Z" fill="#ffffff" stroke="#eef1f4" stroke-width=".5"/>
<path d="M1012.0,378.3 1015.6,381.0 1013.8,381.7 1011.6,379.5Z" fill="#ffffff" stroke="#eef1f4" stroke-width=".5"/>
<path d="M1036.3,404.4 1039.0,401.7 1039.3,403.3 1037.2,406.2Z" fill="#ffffff" stroke="#eef1f4" stroke-width=".5"/>
<path d="M1022.8,417.0 1025.5,413.4 1026.4,415.2 1024.6,421.5Z" fill="#ffffff" stroke="#eef1f4" stroke-width=".5"/>
<path d="M1155.0,407.1 1157.4,406.2 1156.8,408.0Z" fill="#ffffff" stroke="#eef1f4" stroke-width=".5"/>
<path d="M485.0,453.8 495.8,454.7 503.0,460.1 510.2,465.5 515.6,470.9 523.7,474.5 521.0,479.9 517.4,483.5 512.0,478.1 506.6,476.3 500.3,483.5 497.6,488.0 503.0,478.0 503.9,485.2 501.2,491.5 495.8,492.4 489.5,495.1 485.0,495.1Z" fill="#ffffff" stroke="#eef1f4" stroke-width=".5"/>
<path d="M512.0,478.0 519.2,478.0 518.3,482.5 514.7,482.5Z" fill="#ffffff" stroke="#eef1f4" stroke-width=".5"/>
<path d="M501.2,446.1 505.7,443.9 509.3,445.7 506.6,448.4 502.1,449.3Z" fill="#ffffff" stroke="#eef1f4" stroke-width=".5"/>
<path d="M918.0,552.5 920.2,551.4 921.3,547.0 925.2,546.4 926.9,548.6 927.4,551.4 931.3,550.3 934.1,548.6 931.9,547.0 935.7,544.2 936.8,545.9 935.7,551.4 939.1,554.2 942.9,555.8 945.7,558.0 942.4,560.3 935.7,558.0 929.1,557.5 922.4,560.3 918.6,559.7 916.9,558.6 916.4,556.4Z" fill="#9fc5e8" stroke="#9fc5e8" stroke-width=".5"/>
<path d="M954.6,550.7 957.5,547.4 962.7,544.7 966.4,545.7 966.1,548.5 962.7,550.3 961.3,551.1 963.0,554.0 964.6,557.8 965.7,563.1 967.7,567.5 967.2,571.3 960.2,570.4 958.6,566.4 960.8,560.9 958.6,556.4 956.2,552.9Z" fill="#9fc5e8" stroke="#9fc5e8" stroke-width=".5"/>
<path d="M956.5,586.5 958.8,586.3 961.2,589.3 963.4,592.9 965.6,594.5 968.7,593.8 971.8,594.7 973.8,596.3 977.6,598.0 975.4,599.2 972.9,598.5 971.2,597.6 970.0,599.6 967.6,600.7 964.5,600.3 962.7,597.8 960.7,594.5 958.5,591.2 957.0,588.5Z" fill="#9fc5e8" stroke="#9fc5e8" stroke-width=".5"/>
<path d="M928.4,592.0 930.2,590.0 931.1,592.7 932.4,592.0 934.9,597.6 938.3,604.2 941.9,610.9 945.5,617.5 948.6,623.6 950.1,626.6 947.7,628.9 944.6,625.5 940.8,619.5 937.5,613.1 934.2,606.4 930.9,599.2 929.1,595.4Z" fill="#9fc5e8" stroke="#9fc5e8" stroke-width=".5"/>
<path d="M720.5,627.3 725.2,635.9 726.8,640.5 729.9,647.6" fill="none" stroke="#dedede" stroke-width="1"/>
<path d="M741.6,633.5 740.8,640.5 742.4,646.0" fill="none" stroke="#dedede" stroke-width="1"/>
<path d="M747.0,637.4 748.6,646.0" fill="none" stroke="#dedede" stroke-width="1"/>
<path d="M753.3,638.2 754.1,645.2" fill="none" stroke="#dedede" stroke-width="1"/>
<path d="M701.0,656.1 709.6,651.4 718.2,654.6 723.7,653.0" fill="none" stroke="#dedede" stroke-width="1"/>
<path d="M704.9,646.8 711.2,648.3 716.6,654.6" fill="none" stroke="#dedede" stroke-width="1"/>
<path d="M722.9,685.7 725.2,674.8 724.4,670.2" fill="none" stroke="#dedede" stroke-width="1"/>
<path d="M725.2,693.5 734.6,693.5 739.2,688.9 747.0,687.3" fill="none" stroke="#dedede" stroke-width="1"/>
<path d="M739.2,688.9 737.7,693.5 745.5,699.8 744.7,707.6 753.3,703.7" fill="none" stroke="#dedede" stroke-width="1"/>
<path d="M725.2,693.5 722.1,709.1 719.8,724.7 718.2,740.3 717.4,755.9 719.0,771.5 723.7,777.7" fill="none" stroke="#dedede" stroke-width="1"/>
<path d="M747.0,711.5 745.5,718.5 748.6,723.2" fill="none" stroke="#dedede" stroke-width="1"/>
<path d="M722.9,685.7 725.2,693.5" fill="none" stroke="#dedede" stroke-width="1"/>
<path d="M828.4,600.5 838.1,599.8 838.8,594.9 843.7,593.5 844.4,590.0" fill="none" stroke="#dedede" stroke-width="1"/>
<path d="M844.4,592.8 868.8,610.2 883.5,601.8" fill="none" stroke="#dedede" stroke-width="1"/>
<path d="M880.7,585.1 880.0,597.7 883.5,601.8 891.1,603.2" fill="none" stroke="#dedede" stroke-width="1"/>
<path d="M877.2,573.9 876.5,579.5 880.0,584.4 881.4,578.1" fill="none" stroke="#dedede" stroke-width="1"/>
<path d="M910.7,583.0 910.7,604.6" fill="none" stroke="#dedede" stroke-width="1"/>
<path d="M891.1,603.2 909.3,612.3 910.7,604.6 933.0,604.6" fill="none" stroke="#dedede" stroke-width="1"/>
<path d="M828.4,615.8 848.6,617.2 847.9,597.7 844.4,592.8" fill="none" stroke="#dedede" stroke-width="1"/>
<path d="M827.0,618.6 838.1,619.3 848.6,617.2" fill="none" stroke="#dedede" stroke-width="1"/>
<path d="M892.5,603.2 892.5,615.8 888.3,621.4 889.7,628.3" fill="none" stroke="#dedede" stroke-width="1"/>
<path d="M868.8,610.2 868.1,618.6 861.8,621.4 852.1,622.8 851.4,629.7" fill="none" stroke="#dedede" stroke-width="1"/>
<path d="M868.1,624.2 887.0,622.8 889.0,628.3 880.0,638.1" fill="none" stroke="#dedede" stroke-width="1"/>
<path d="M909.3,612.3 905.1,621.4 907.2,628.3 903.7,629.7" fill="none" stroke="#dedede" stroke-width="1"/>
<path d="M907.2,628.3 920.4,629.7 924.6,625.6 928.8,632.5 931.6,638.1 941.4,640.9 953.9,632.5" fill="none" stroke="#dedede" stroke-width="1"/>
<path d="M889.7,636.0 898.1,632.5 903.7,629.7 912.1,638.1 921.8,640.9" fill="none" stroke="#dedede" stroke-width="1"/>
<path d="M895.3,643.7 898.1,639.5 912.1,638.8" fill="none" stroke="#dedede" stroke-width="1"/>
<path d="M895.3,643.7 892.5,654.9 885.6,659.7 895.3,660.4 896.0,664.6 904.4,663.9 905.1,671.6 917.6,671.6 920.4,675.8" fill="none" stroke="#dedede" stroke-width="1"/>
<path d="M919.7,652.1 919.7,663.2 921.8,667.4 917.6,671.6" fill="none" stroke="#dedede" stroke-width="1"/>
<path d="M930.9,651.4 940.0,657.6" fill="none" stroke="#dedede" stroke-width="1"/>
<path d="M942.8,643.7 942.8,652.1 944.1,656.2" fill="none" stroke="#dedede" stroke-width="1"/>
<path d="M931.6,639.5 941.4,642.3 948.3,639.5" fill="none" stroke="#dedede" stroke-width="1"/>
<path d="M919.7,656.2 930.2,652.1" fill="none" stroke="#dedede" stroke-width="1"/>
<path d="M928.1,678.6 941.4,671.6" fill="none" stroke="#dedede" stroke-width="1"/>
<path d="M884.2,683.4 903.7,684.1 914.9,684.8" fill="none" stroke="#dedede" stroke-width="1"/>
<path d="M904.4,671.6 904.4,681.4 912.1,682.8" fill="none" stroke="#dedede" stroke-width="1"/>
<path d="M905.1,681.4 917.6,678.6 926.0,671.6 928.8,667.4" fill="none" stroke="#dedede" stroke-width="1"/>
<path d="M914.9,684.8 920.4,680.0 927.4,678.6" fill="none" stroke="#dedede" stroke-width="1"/>
<path d="M900.9,685.5 900.9,699.5" fill="none" stroke="#dedede" stroke-width="1"/>
<path d="M912.1,685.5 916.2,692.5 922.5,694.2" fill="none" stroke="#dedede" stroke-width="1"/>
<path d="M927.4,678.6 930.2,685.5 926.0,693.9" fill="none" stroke="#dedede" stroke-width="1"/>
<path d="M827.0,620.0 835.3,621.4 838.1,625.6" fill="none" stroke="#dedede" stroke-width="1"/>
<path d="M829.8,625.6 838.1,626.3 843.7,629.7 845.8,635.3" fill="none" stroke="#dedede" stroke-width="1"/>
<path d="M846.5,640.9 845.8,629.7 851.4,629.7" fill="none" stroke="#dedede" stroke-width="1"/>
<path d="M855.6,639.5 855.6,628.3" fill="none" stroke="#dedede" stroke-width="1"/>
<path d="M860.5,638.8 860.5,627.7" fill="none" stroke="#dedede" stroke-width="1"/>
<path d="M864.6,638.8 865.3,627.0" fill="none" stroke="#dedede" stroke-width="1"/>
<path d="M866.0,638.1 868.1,624.2" fill="none" stroke="#dedede" stroke-width="1"/>
<path d="M880.0,638.1 881.4,645.1 889.7,645.1 889.7,636.0 889.0,628.3" fill="none" stroke="#dedede" stroke-width="1"/>
<path d="M878.6,649.3 885.6,649.3 885.6,659.7" fill="none" stroke="#dedede" stroke-width="1"/>
<path d="M949.0,622.8 958.1,617.9 966.5,613.0 970.0,606.0" fill="none" stroke="#dedede" stroke-width="1"/>
<path d="M970.0,606.0 973.4,600.5 970.6,597.7" fill="none" stroke="#dedede" stroke-width="1"/>
<path d="M931.6,585.8 935.8,589.3 945.5,584.4 953.9,590.0 957.4,589.3" fill="none" stroke="#dedede" stroke-width="1"/>
<path d="M935.8,589.3 938.6,596.3 945.5,600.5 953.9,590.0" fill="none" stroke="#dedede" stroke-width="1"/>
<path d="M957.4,589.3 960.9,596.3 965.1,594.9" fill="none" stroke="#dedede" stroke-width="1"/>
<path d="M942.8,656.2 931.6,657.6 930.2,652.1" fill="none" stroke="#dedede" stroke-width="1"/>
<path d="M1035.2,537.6 1044.1,532.6 1054.1,534.3 1057.4,528.8 1065.1,533.7 1072.9,534.8 1079.5,537.6 1087.3,534.8 1092.8,536.5 1098.3,534.3" fill="none" stroke="#dedede" stroke-width="1"/>
<path d="M917.5,500.2 919.1,494.9 922.4,488.3 919.1,481.6 920.2,475.0" fill="none" stroke="#dedede" stroke-width="1"/>
<path d="M907.5,522.1 912.5,519.3 916.9,517.1 915.8,511.5 918.0,507.1 913.6,502.7" fill="none" stroke="#dedede" stroke-width="1"/>
<path d="M909.2,503.6 913.6,508.2 912.5,512.6 906.9,512.6" fill="none" stroke="#dedede" stroke-width="1"/>
<path d="M903.1,518.2 906.9,517.1 912.5,519.3" fill="none" stroke="#dedede" stroke-width="1"/>
<path d="M916.9,517.1 922.4,519.3 924.7,524.8 922.4,528.2" fill="none" stroke="#dedede" stroke-width="1"/>
<path d="M949.9,569.9 956.5,576.5 958.2,586.5" fill="none" stroke="#dedede" stroke-width="1"/>
<path d="M982.0,598.1 983.7,588.7 982.0,584.3 983.1,576.5 990.9,573.2 997.5,572.1 1001.9,568.8" fill="none" stroke="#dedede" stroke-width="1"/>
<path d="M983.7,588.7 993.1,586.5 999.7,578.8 1008.6,578.8" fill="none" stroke="#dedede" stroke-width="1"/>
<path d="M993.1,597.0 995.3,592.0 1000.3,593.7" fill="none" stroke="#dedede" stroke-width="1"/>
<path d="M967.6,571.0 973.2,567.7 982.0,571.0 983.1,576.5" fill="none" stroke="#dedede" stroke-width="1"/>
<path d="M964.8,559.4 968.7,567.7 973.2,567.7" fill="none" stroke="#dedede" stroke-width="1"/>
<path d="M931.1,573.2 942.1,572.1 949.9,569.9" fill="none" stroke="#dedede" stroke-width="1"/>
<path d="M933.3,581.0 942.1,576.5 942.1,572.1" fill="none" stroke="#dedede" stroke-width="1"/>
<path d="M933.3,581.0 938.8,586.5 956.5,587.1" fill="none" stroke="#dedede" stroke-width="1"/>
<path d="M1054.4,590.5 1056.6,602.7 1054.4,611.5 1056.6,619.3 1055.5,625.9" fill="none" stroke="#dedede" stroke-width="1"/>
<path d="M1063.3,603.8 1063.8,611.5 1068.8,612.6 1073.2,619.3 1067.7,621.5 1062.1,623.7" fill="none" stroke="#dedede" stroke-width="1"/>
<path d="M1068.8,601.4 1073.2,611.5 1075.4,617.6" fill="none" stroke="#dedede" stroke-width="1"/>
<path d="M1140.2,654.7 1140.2,668.0" fill="none" stroke="#dedede" stroke-width="1"/>
<path d="M900.5,459.2 907.7,454.7 914.9,452.0 922.1,454.7 925.7,454.7" fill="none" stroke="#dedede" stroke-width="1"/>
<path d="M925.7,454.7 923.9,461.9 929.3,470.9 925.7,479.9 931.1,488.0" fill="none" stroke="#dedede" stroke-width="1"/>
<path d="M887.0,541.4 895.9,539.8 897.0,541.4 902.5,540.3" fill="none" stroke="#dedede" stroke-width="1"/>
<path d="M897.5,537.0 904.7,536.5" fill="none" stroke="#dedede" stroke-width="1"/>
<path d="M898.6,559.2 900.3,556.9 902.0,558.8 904.2,557.5 906.4,557.5 906.9,560.3" fill="none" stroke="#dedede" stroke-width="1"/>
<path d="M907.5,553.6 906.4,557.5" fill="none" stroke="#dedede" stroke-width="1"/>
<path d="M1036.3,537.4 1044.4,532.0 1056.1,532.9 1057.9,529.3 1067.8,533.8 1078.6,535.6 1088.5,534.7 1093.0,538.3" fill="none" stroke="#dedede" stroke-width="1"/>
<path d="M708.1,334.2 718.9,333.1 733.3,336.0 739.9,345.0 734.2,354.9 727.9,363.9 722.5,372.0 716.2,378.3 713.5,387.3 714.4,391.8 708.1,397.2 705.4,403.5 706.3,409.8 697.3,408.9 688.3,402.6 685.6,397.2 690.1,393.6 686.5,390.0 691.9,384.6 687.4,377.4 686.5,370.2 682.9,365.1 693.7,370.2 703.6,367.5 704.5,365.1 695.5,368.4 686.5,363.0 680.2,356.7 678.4,355.8 682.9,350.4 690.1,347.7 697.3,339.6 702.7,336.0Z" fill="#917c3b" stroke="#917c3b" stroke-width="1.7"/>
<path d="M673.9,358.5 677.9,359.7 682.0,367.5 686.2,372.0 686.9,378.3 690.1,383.7 685.6,389.6 682.9,393.6 675.7,388.2 672.1,381.0 668.5,373.8 670.3,364.8Z" fill="#917c3b" stroke="#917c3b" stroke-width="1.7"/>
<path d="M662.2,373.4 664.6,374.1 665.5,379.5 663.1,378.3Z" fill="#917c3b" stroke="#917c3b" stroke-width="1.7"/>
<path d="M651.4,381.9 655.9,381.3 660.4,386.4 664.0,391.8 664.9,397.2 658.6,398.6 655.9,393.6 653.2,389.1Z" fill="#917c3b" stroke="#917c3b" stroke-width="1.7"/>
<path d="M665.8,387.8 670.3,390.0 673.9,395.4 676.6,399.9 671.2,400.8 667.6,395.4Z" fill="#917c3b" stroke="#917c3b" stroke-width="1.7"/>
<path d="M639.7,388.2 644.8,390.9 643.3,395.0 637.0,395.7 642.4,397.2 641.5,401.7 637.0,401.7 632.5,395.4Z" fill="#917c3b" stroke="#917c3b" stroke-width="1.7"/>
<path d="M623.5,401.7 630.7,399.9 632.2,404.4 627.1,410.7 623.5,416.1 617.2,412.5 619.9,407.1Z" fill="#917c3b" stroke="#917c3b" stroke-width="1.7"/>
<path d="M628.9,409.8 634.3,410.7 641.5,411.6 644.2,406.2 646.0,411.6 651.4,414.3 650.5,420.6 643.3,422.4 637.0,425.4 632.5,421.5 628.0,417.9Z" fill="#917c3b" stroke="#917c3b" stroke-width="1.7"/>
<path d="M654.1,408.0 660.4,407.1 666.7,408.0 668.5,412.5 667.6,420.6 662.2,420.9 657.7,416.1 655.0,413.4Z" fill="#917c3b" stroke="#917c3b" stroke-width="1.7"/>
<path d="M668.9,404.7 674.8,405.8 676.1,409.8 671.2,411.6Z" fill="#917c3b" stroke="#917c3b" stroke-width="1.7"/>
<path d="M670.3,416.1 674.3,414.3 675.7,423.3 670.3,423.3Z" fill="#917c3b" stroke="#917c3b" stroke-width="1.7"/>
<path d="M676.6,408.9 682.9,408.0 685.6,415.2 691.9,416.1 699.1,413.4 704.5,415.2 703.6,423.3 695.5,425.1 686.5,426.0 678.4,423.3 677.2,415.2Z" fill="#917c3b" stroke="#917c3b" stroke-width="1.7"/>
<path d="M613.6,425.6 622.6,424.2 628.9,426.0 632.5,430.5 628.0,435.8 624.4,442.1 617.2,447.5 610.9,441.2 612.7,434.0Z" fill="#917c3b" stroke="#917c3b" stroke-width="1.7"/>
<path d="M627.1,436.7 632.5,433.1 639.7,434.9 646.0,437.6 647.8,431.4 653.2,430.5 654.1,442.1 660.4,452.0 658.6,458.3 653.2,460.1 646.9,458.3 637.9,461.9 628.9,457.4 628.0,452.0 636.1,451.1 627.1,446.6 624.4,442.1Z" fill="#917c3b" stroke="#917c3b" stroke-width="1.7"/>
<path d="M660.4,428.7 667.6,427.8 669.4,434.9 666.7,445.7 662.2,444.8 657.4,435.8Z" fill="#917c3b" stroke="#917c3b" stroke-width="1.7"/>
<path d="M672.1,427.8 681.1,426.9 682.0,429.6 677.5,436.7 675.7,443.9 671.2,442.1 670.3,434.9Z" fill="#917c3b" stroke="#917c3b" stroke-width="1.7"/>
<path d="M683.6,433.8 688.2,429.8 694.0,430.9 699.7,429.8 707.8,431.5 711.8,439.0 715.2,441.2 722.7,447.6 727.3,452.7 729.0,459.0 731.9,463.6 738.8,469.4 739.9,473.4 735.9,480.3 731.9,477.4 728.4,475.1 730.7,480.9 734.8,487.8 731.9,491.2 728.4,488.9 725.0,486.6 720.4,488.9 718.1,485.5 713.5,482.6 708.9,482.6 706.6,479.7 713.5,476.3 715.2,471.7 716.4,468.2 713.5,467.1 708.9,468.2 707.8,464.8 710.1,461.9 707.8,457.9 706.0,453.3 702.0,451.0 696.3,453.3 691.7,453.9 685.9,450.4 683.1,444.7 682.5,439.5Z" fill="#917c3b" stroke="#917c3b" stroke-width="1.7"/>
<path d="M671.6,428.6 677.9,426.9 681.9,429.2 679.6,434.9 676.8,439.5 675.6,445.3 679.6,452.7 676.8,456.8 674.5,454.5 669.3,453.3 669.3,446.4 671.6,440.7 672.2,434.9Z" fill="#917c3b" stroke="#917c3b" stroke-width="1.7"/>
<path d="M657.2,436.1 661.2,428.6 667.6,427.5 668.7,432.6 670.4,440.1 664.7,445.8 661.8,442.4 659.0,439.0Z" fill="#917c3b" stroke="#917c3b" stroke-width="1.7"/>
<path d="M694.0,490.1 698.0,488.3 698.6,490.6 695.1,492.9Z" fill="#917c3b" stroke="#917c3b" stroke-width=".5"/>
<path d="M701.4,492.4 703.2,491.2 702.9,494.7Z" fill="#917c3b" stroke="#917c3b" stroke-width=".5"/>
<path d="M702.0,515.3 703.7,513.6 703.2,517.6Z" fill="#917c3b" stroke="#917c3b" stroke-width=".5"/>
<path d="M582.2,453.3 576.8,452.9 569.6,451.1 560.6,450.8 554.3,448.4 550.7,445.7 544.4,450.2 539.0,454.7 536.3,460.1 530.9,461.0 531.8,464.6 539.0,467.3 542.6,471.8 537.2,473.6 530.9,474.5 527.3,477.2 532.7,480.8 540.8,481.7 539.9,488.0 539.0,481.6 537.2,487.0 531.8,490.6 530.9,495.1 536.3,497.8 528.2,499.6 531.8,502.3 539.0,501.4 544.4,503.2 539.0,506.8 546.2,505.0 548.9,507.7 544.4,512.2 539.0,515.8 534.5,520.3 537.2,521.2 543.5,516.7 549.8,513.1 554.3,508.6 557.0,505.0 559.7,503.2 562.4,497.8 566.0,496.0 569.6,498.7 575.0,499.6 582.2,500.3 585.8,505.0 589.4,509.5 593.0,514.9 596.9,521.2 601.9,520.8 603.2,515.4 597.8,511.3 593.3,505.0 591.2,501.0 586.7,500.5 582.2,499.2Z" fill="#f1c232" stroke="#f1c232" stroke-width=".5"/>
<path d="M525.5,524.8 530.9,522.1 530.0,523.9 526.4,526.6Z" fill="#f1c232" stroke="#f1c232" stroke-width=".5"/>
<path d="M509.3,529.3 517.4,527.5 517.4,530.2 510.2,530.5Z" fill="#f1c232" stroke="#f1c232" stroke-width=".5"/>
<path d="M517.4,498.3 520.3,499.2 519.5,500.7 517.4,499.8Z" fill="#f1c232" stroke="#f1c232" stroke-width=".5"/>
<path d="M554.3,510.4 559.7,507.7 558.8,511.3 554.3,513.1Z" fill="#f1c232" stroke="#f1c232" stroke-width=".5"/>
<path d="M519.2,485.2 526.4,487.0 525.5,489.2 520.1,487.4Z" fill="#f1c232" stroke="#f1c232" stroke-width=".5"/>
<path d="M548.0,606.1 550.7,606.1 551.6,607.9 548.9,607.5Z" fill="#f1c232" stroke="#f1c232" stroke-width=".5"/>
<path d="M551.2,609.7 554.3,610.2 553.0,612.0 550.7,611.1Z" fill="#f1c232" stroke="#f1c232" stroke-width=".5"/>
<path d="M1202.7,525.9 1204.5,525.9 1204.5,527.3 1202.7,527.3Z" fill="#f1c232" stroke="#f1c232" stroke-width=".5"/>
<path d="M1215.3,530.2 1217.1,530.2 1217.1,531.6 1215.3,531.6Z" fill="#f1c232" stroke="#f1c232" stroke-width=".5"/>
<path d="M582.2,453.3 591.2,457.4 596.6,454.7 603.7,452.0 607.3,450.8 610.9,454.7 616.3,454.7 625.3,457.4 634.3,460.1 636.1,463.7 643.3,464.6 646.9,467.3 654.1,461.9 660.4,463.7 666.7,466.4 653.8,463.4 660.1,461.9 664.1,457.9 667.0,454.5 669.3,455.6 673.3,458.5 677.9,455.6 682.5,457.9 684.2,460.2 687.1,465.9 688.8,468.8 691.1,465.9 691.7,459.0 693.4,454.5 697.4,454.5 699.7,457.9 699.1,463.6 700.3,468.2 697.4,470.5 695.1,474.6 698.0,480.9 702.0,485.5 699.7,486.6 696.3,484.9 693.4,487.2 690.5,487.8 689.4,484.3 687.7,486.6 683.6,486.0 679.6,488.9 675.6,494.7 673.3,499.2 673.9,504.4 676.8,506.1 677.3,511.3 681.9,510.7 688.2,514.2 694.0,517.6 698.6,519.3 698.0,523.9 700.9,528.0 702.6,530.8 704.3,528.0 702.6,520.5 706.0,517.6 708.9,514.2 707.8,509.6 704.9,506.1 706.6,500.4 706.0,494.7 707.2,490.6 712.4,489.5 714.7,491.8 719.2,493.5 721.5,496.4 722.7,502.1 726.7,506.1 730.2,504.4 732.5,498.1 734.8,502.7 737.6,508.4 741.1,515.3 747.4,521.1 750.8,527.4 748.0,530.8 742.2,533.7 736.5,535.4 731.9,537.1 727.3,538.3 731.9,537.4 736.5,538.3 738.8,541.7 742.2,544.6 742.8,546.9 737.6,549.2 733.0,552.1 730.7,554.4 729.0,552.1 731.9,549.2 730.7,546.3 728.4,549.8 727.3,543.5 724.4,542.9 720.4,545.8 714.7,549.8 708.9,553.2 702.6,553.8 698.6,557.2 697.4,553.2 695.1,547.5 690.5,542.9 685.9,540.0 679.0,539.4 673.9,538.3 672.7,536.2 672.2,537.1 616.3,538.3 610.9,535.6 607.3,532.0 604.6,527.5 601.9,523.0 603.2,515.4 597.8,511.3 593.3,505.0 591.2,501.0 586.7,500.5 582.2,499.2Z" fill="#917c3b" stroke="#917c3b" stroke-width=".5"/>
<path d="M742.8,541.7 746.2,534.9 750.8,530.3 753.1,536.0 756.6,539.4 756.6,545.8 753.1,544.6 750.3,543.5 747.4,542.9Z" fill="#917c3b" stroke="#917c3b" stroke-width=".5"/>
<path d="M596.6,522.1 600.1,524.8 601.9,529.3 599.2,527.5Z" fill="#917c3b" stroke="#917c3b" stroke-width=".5"/>
<path d="M594.4,519.7 596.2,519.7 596.6,522.3 594.8,521.9Z" fill="#917c3b" stroke="#917c3b" stroke-width=".5"/>
<path d="M616.3,538.3 613.6,542.8 613.1,553.6 614.5,562.6 618.1,569.8 622.6,577.0 628.9,581.5 637.9,584.2 650.5,584.2 653.2,586.0 658.6,590.5 662.2,593.1 666.7,596.7 668.5,591.4 675.7,587.8 682.9,588.1 688.3,586.0 693.7,586.9 697.3,586.0 696.4,589.6 698.2,594.9 700.9,598.5 702.7,595.8 700.9,589.6 700.0,584.2 703.6,579.7 709.0,575.2 710.8,568.0 716.2,562.6 720.7,559.9 722.5,556.3 727.0,551.8 728.8,550.0 725.0,553.8 728.2,549.8 727.3,543.5 724.4,542.9 720.4,545.8 714.7,549.8 708.9,553.2 702.6,553.8 698.6,557.2 697.4,553.2 695.1,547.5 690.5,542.9 685.9,540.0 679.0,539.4 673.9,538.3 672.7,536.2 672.2,537.1Z" fill="#f1c232" stroke="#f1c232" stroke-width=".5"/>
<path d="M628.9,581.5 637.9,584.2 650.5,584.2 653.2,586.0 658.6,590.5 662.2,593.1 666.7,596.7 667.6,603.9 670.3,609.3 673.9,612.9 679.3,611.1 681.1,606.6 689.2,605.7 688.3,611.1 684.7,612.0 683.8,614.7 678.4,617.4 672.1,618.3 664.9,616.5 657.7,612.9 651.4,607.5 650.5,602.1 646.0,596.7 641.5,591.4 637.0,586.0 634.7,585.6 637.6,591.7 641.9,598.2 644.4,602.5 640.1,600.7 635.4,593.5 631.6,586.9Z" fill="#886e1d" stroke="#886e1d" stroke-width=".5"/>
<path d="M680.0,613.4 682.3,611.4 686.2,611.1 685.5,615.6 683.1,620.3 680.0,621.8 678.1,618.7 678.4,615.0Z" fill="#7f6000" stroke="#7f6000" stroke-width=".5"/>
<path d="M705.3,612.2 709.6,612.8 709.3,614.0 705.3,613.4Z" fill="#7f6000" stroke="#7f6000" stroke-width=".5"/>
<path d="M719.3,609.0 724.4,610.1 726.0,612.5 719.8,614.8Z" fill="#7f6000" stroke="#7f6000" stroke-width=".5"/>
<path d="M760.3,641.3 762.6,646.8 772.0,650.7 773.5,653.0 781.3,653.8 789.1,657.7 791.9,663.1 791.0,669.4 787.6,674.1 784.5,679.5 783.7,687.3 779.8,695.1 772.8,697.4 765.7,701.3 764.2,709.1 759.5,715.4 755.6,719.3 753.3,715.4 747.0,711.5 750.2,707.6 754.1,702.9 753.3,698.2 748.6,693.5 747.0,687.3 741.6,682.6 739.2,678.0 733.0,673.3 729.9,670.2 725.2,671.7 722.1,668.6 718.2,667.0 715.1,663.9 718.2,660.8 722.9,659.2 724.4,653.0 723.7,646.8 729.9,647.6 734.6,643.7 740.0,641.3 742.4,646.0 748.6,646.8 754.8,645.2 758.0,642.9Z" fill="#917c3b" stroke="#917c3b" stroke-width=".5"/>
<path d="M510.2,744.5 512.0,744.5 511.6,746.3 510.2,746.3Z" fill="#83670f" stroke="#83670f" stroke-width=".5"/>
<path d="M893.2,706.5 897.4,707.2 900.2,705.1 900.9,699.5 903.7,702.3 909.3,700.2 913.5,697.4 917.6,694.6 922.5,694.2 924.6,697.4 924.3,701.6 926.7,702.3 923.9,707.9 919.7,714.8 914.9,719.7 906.5,721.8 900.2,722.5 897.4,720.4 896.0,714.8 893.9,710.0Z" fill="#83670f" stroke="#83670f" stroke-width=".5"/>
<path d="M922.5,641.6 928.8,640.2 930.9,645.1 929.5,651.4 919.7,652.1 919.7,647.9Z" fill="#7f6000" stroke="#7f6000" stroke-width=".5"/>
<path d="M826.8,590.5 828.9,589.9 829.3,591.4 827.1,592.1Z" fill="#83670f" stroke="#83670f" stroke-width=".5"/>
<path d="M831.3,590.3 833.6,589.6 834.0,591.0 831.8,591.7Z" fill="#83670f" stroke="#83670f" stroke-width=".5"/>
<path d="M888.7,475.0 909.2,475.0 906.9,476.7 904.2,479.4 903.1,483.9 900.3,486.1 896.4,490.5 895.9,496.0 898.6,500.5 898.1,503.8 895.3,507.1 894.2,512.6 891.4,516.0 889.8,517.6 886.5,517.6 885.9,512.6 884.2,507.1 883.5,504.9 885.3,497.1 885.3,491.6 884.8,486.1 886.5,481.6 887.6,475.0Z" fill="#8c752c" stroke="#8c752c" stroke-width=".5"/>
<path d="M900.5,459.2 908.6,464.6 909.2,476.3 905.9,481.7 905.0,488.9 884.3,488.9 887.9,479.9 891.5,470.9 896.0,461.9Z" fill="#8c752c" stroke="#8c752c" stroke-width=".5"/>
<path d="M898.1,508.2 899.7,507.7 897.5,512.6 896.4,512.1Z" fill="#8c752c" stroke="#8c752c" stroke-width=".5"/>
<path d="M839.9,522.6 843.3,519.3 846.6,518.2 848.8,521.0 848.8,524.8 847.7,528.2 843.8,529.8 840.5,530.4 839.4,529.3 841.1,525.9Z" fill="#7f6000" stroke="#7f6000" stroke-width=".5"/>
<path d="M847.1,508.2 850.5,506.6 854.9,504.3 855.5,507.1 853.8,509.3 857.1,510.4 856.0,513.8 858.2,517.6 860.4,521.5 862.1,525.4 864.3,527.6 863.8,530.4 860.4,532.0 856.0,532.6 851.6,533.7 849.4,535.3 851.0,532.0 853.2,529.3 850.5,528.2 852.1,525.4 852.7,522.1 851.0,519.3 848.8,517.6 848.8,513.8 846.6,511.0Z" fill="#aca692" stroke="#aca692" stroke-width=".5"/>
<path d="M846.6,518.2 849.4,518.7 849.9,520.4 848.8,521.0Z" fill="#aca692" stroke="#aca692" stroke-width=".5"/>
<path d="M858.0,498.3 858.8,498.3 858.6,501.0 857.9,500.7Z" fill="#aca692" stroke="#aca692" stroke-width=".5"/>
<path d="M851.0,540.3 854.3,539.2 857.1,539.8 858.2,536.5 861.0,537.0 863.2,534.2 866.5,532.0 869.3,533.7 872.1,536.5 874.3,537.0 877.0,538.7 875.4,543.1 874.3,545.9 875.4,548.6 874.8,551.4 877.6,553.1 875.4,554.7 871.5,555.3 867.6,554.7 866.0,556.9 861.5,556.4 857.7,555.3 858.2,550.3 857.7,545.9 855.5,543.1 852.1,542.0Z" fill="#beb8a7" stroke="#beb8a7" stroke-width=".5"/>
<path d="M878.2,555.3 879.8,554.7 879.8,559.2 878.4,559.2Z" fill="#beb8a7" stroke="#beb8a7" stroke-width=".5"/>
<path d="M843.3,554.2 847.1,553.1 852.7,553.6 857.7,555.3 861.5,556.4 866.0,556.9 867.6,558.0 864.9,560.8 862.1,563.6 861.5,566.9 858.2,570.2 854.3,571.3 851.6,572.4 848.3,571.9 846.6,569.7 847.7,565.8 848.8,560.3 848.8,557.5 844.4,556.9Z" fill="#83670f" stroke="#83670f" stroke-width=".5"/>
<path d="M865.4,563.6 869.3,562.7 869.5,563.8 866.0,564.7Z" fill="#83670f" stroke="#83670f" stroke-width=".5"/>
<path d="M868.7,528.2 870.4,525.9 873.7,524.8 875.4,525.4 874.8,529.3 873.2,531.5 869.8,530.9Z" fill="#917c3b" stroke="#917c3b" stroke-width=".5"/>
<path d="M867.6,531.5 869.8,530.9 873.2,531.5 873.7,533.7 871.5,534.8 868.7,533.1Z" fill="#7f6000" stroke="#7f6000" stroke-width=".5"/>
<path d="M878.2,520.4 881.5,519.8 885.3,521.0 888.7,519.8 889.8,522.6 889.2,527.0 890.3,531.5 887.6,534.8 889.2,539.2 886.5,541.4 882.6,542.5 877.0,542.5 875.4,540.3 874.3,537.0 873.7,533.7 873.2,531.5 874.8,529.3 875.4,525.4 877.6,523.7Z" fill="#958349" stroke="#958349" stroke-width=".5"/>
<path d="M889.8,522.6 895.9,519.8 902.5,521.5 907.5,522.1 908.6,526.5 907.5,531.5 908.6,535.3 904.7,536.5 900.3,535.9 897.5,537.0 893.7,535.3 890.3,533.7 890.3,531.5 889.2,527.0Z" fill="#83670f" stroke="#83670f" stroke-width=".5"/>
<path d="M887.6,534.8 890.3,533.7 893.7,535.3 897.5,537.0 895.9,539.2 891.4,539.8 889.2,539.2Z" fill="#7f6000" stroke="#7f6000" stroke-width=".5"/>
<path d="M894.2,544.2 897.0,541.4 902.5,540.3 905.8,540.9 904.7,543.7 902.5,545.9 898.1,548.1 894.8,547.0Z" fill="#886e1d" stroke="#886e1d" stroke-width=".5"/>
<path d="M874.8,544.2 878.2,543.1 881.5,543.7 880.9,545.3 877.0,545.9 875.0,545.6Z" fill="#83670f" stroke="#83670f" stroke-width=".5"/>
<path d="M874.3,546.4 875.0,545.6 877.0,545.9 880.9,545.3 882.6,544.8 885.3,544.2 887.0,545.9 887.6,548.6 884.8,549.7 885.9,552.5 889.8,556.4 893.7,560.3 897.0,562.5 897.5,563.6 894.8,563.6 893.1,562.5 893.7,565.8 895.3,567.5 893.7,570.2 892.0,568.0 890.9,564.7 887.6,560.8 883.7,557.5 880.4,554.2 877.6,553.1 874.8,551.4 875.4,548.6Z" fill="#a39875" stroke="#a39875" stroke-width=".5"/>
<path d="M885.3,568.6 889.2,569.1 892.5,568.6 892.0,570.8 889.2,571.9 886.5,570.2Z" fill="#a39875" stroke="#a39875" stroke-width=".5"/>
<path d="M877.6,560.3 879.8,559.7 880.1,565.2 877.9,565.8Z" fill="#a39875" stroke="#a39875" stroke-width=".5"/>
<path d="M887.6,548.6 893.7,547.5 894.8,547.0 898.1,548.1 898.6,550.8 895.9,551.4 893.7,550.3 891.4,551.4 894.2,554.7 897.0,557.5 895.9,558.0 891.4,554.2 888.7,551.4Z" fill="#83670f" stroke="#83670f" stroke-width=".5"/>
<path d="M901.4,554.7 903.6,555.8 904.2,557.5 902.0,558.8 900.3,556.9Z" fill="#83670f" stroke="#83670f" stroke-width=".5"/>
<path d="M902.5,545.9 904.7,543.7 909.2,542.0 913.6,541.4 916.9,542.5 917.5,547.0 920.2,548.1 919.7,551.4 916.9,552.5 911.4,553.1 907.5,553.6 905.8,550.3Z" fill="#8c752c" stroke="#8c752c" stroke-width=".5"/>
<path d="M916.9,542.5 918.6,541.4 921.3,545.9 920.2,548.1 917.5,547.0Z" fill="#7f6000" stroke="#7f6000" stroke-width=".5"/>
<path d="M907.5,531.5 909.2,529.3 915.8,529.8 922.4,528.2 928.0,528.2 931.3,531.5 935.7,533.7 940.7,535.9 940.2,541.4 935.7,544.2 931.9,547.0 929.1,547.5 925.2,546.4 922.4,547.0 921.3,545.9 918.6,541.4 916.9,542.5 913.6,541.4 909.2,542.0 905.8,540.9 905.8,538.7 904.7,536.5 908.6,535.3Z" fill="#83670f" stroke="#83670f" stroke-width=".5"/>
<path d="M926.9,548.6 930.2,548.1 933.0,549.2 930.7,550.8 927.4,551.4Z" fill="#83670f" stroke="#83670f" stroke-width=".5"/>
<path d="M900.3,563.6 902.5,561.9 906.9,560.3 909.2,559.2 913.6,558.0 914.7,559.7 911.4,560.8 909.2,561.4 910.3,563.6 908.0,564.1 909.2,566.9 907.5,570.2 905.8,571.9 904.2,571.3 902.5,567.5 901.4,565.2Z" fill="#83670f" stroke="#83670f" stroke-width=".5"/>
<path d="M908.0,574.1 912.5,575.2 912.5,576.0 908.0,575.2Z" fill="#83670f" stroke="#83670f" stroke-width=".5"/>
<path d="M913.6,562.5 916.9,560.8 922.4,560.3 929.1,557.5 935.7,558.0 942.4,560.3 947.9,559.7 950.1,560.8 952.3,562.5 952.9,563.6 950.1,570.8 945.7,570.2 940.2,571.3 934.6,571.9 932.4,573.5 929.1,572.4 924.7,573.0 920.2,573.0 917.5,571.3 914.7,569.1 913.6,565.8Z" fill="#83670f" stroke="#83670f" stroke-width=".5"/>
<path d="M914.7,559.7 916.9,558.6 918.6,559.7 916.4,561.4 913.6,561.9Z" fill="#83670f" stroke="#83670f" stroke-width=".5"/>
<path d="M940.0,555.6 948.3,556.4 954.4,560.3 951.1,561.4 947.2,560.9 943.3,560.0 940.0,560.3Z" fill="#886e1d" stroke="#886e1d" stroke-width=".5"/>
<path d="M951.1,561.4 954.4,560.3 957.2,562.0 958.8,559.2 961.0,562.0 959.4,564.2 957.7,566.4 956.6,563.1 953.3,563.6Z" fill="#7f6000" stroke="#7f6000" stroke-width=".5"/>
<path d="M929.3,582.3 930.5,582.6 930.3,586.0 929.5,588.3 928.9,585.6Z" fill="#917c3b" stroke="#917c3b" stroke-width=".5"/>
<path d="M954.4,537.6 958.3,532.6 962.1,531.0 967.7,532.1 971.0,534.3 974.3,533.2 978.8,533.7 983.7,531.5 982.1,528.2 984.3,525.4 983.2,523.2 989.8,521.6 995.4,519.3 1000.3,518.6 1001.5,522.1 1005.9,523.2 1006.4,525.4 1012.0,522.7 1015.8,527.6 1019.7,532.6 1025.3,533.2 1029.7,536.5 1033.0,537.6 1031.4,542.0 1030.8,544.3 1026.9,545.4 1025.3,549.2 1021.4,551.5 1021.9,556.4 1019.2,557.5 1013.1,555.3 1006.4,556.4 1002.0,557.0 1003.7,559.2 1000.3,560.9 995.4,560.9 992.0,556.4 990.9,553.7 984.3,553.1 979.9,550.3 976.5,548.1 972.7,549.2 972.1,552.0 968.8,555.3 966.6,556.4 962.1,553.1 960.5,550.3 963.8,548.7 966.0,546.5 963.8,545.4 959.9,547.0 958.3,544.3 956.6,542.0Z" fill="#83670f" stroke="#83670f" stroke-width=".5"/>
<path d="M960.5,550.3 962.1,553.1 966.6,556.4 968.8,555.3 972.1,552.0 972.7,549.2 976.5,548.1 979.9,550.3 984.3,553.1 990.9,553.7 992.0,556.4 995.4,560.9 1000.3,560.9 1006.4,560.3 1003.1,562.5 999.8,563.6 995.4,564.2 994.3,567.5 992.0,569.7 987.6,566.4 984.3,563.1 979.9,559.2 977.6,557.0 974.9,558.1 973.2,560.3 971.6,557.5 968.8,556.4 965.7,552.0 963.8,550.3Z" fill="#7f6000" stroke="#7f6000" stroke-width=".5"/>
<path d="M995.4,564.2 999.8,563.6 1006.4,563.1 1008.7,565.3 1010.9,569.2 1006.4,570.3 1003.1,571.9 1001.5,569.7 997.6,570.3 994.3,570.3 994.3,567.5Z" fill="#7f6000" stroke="#7f6000" stroke-width=".5"/>
<path d="M1000.3,593.7 1006.4,592.0 1008.6,588.7 1011.9,584.3 1011.4,581.0 1008.6,578.8 1011.9,577.6 1014.1,575.4 1017.4,575.4 1019.1,581.0 1016.9,582.6 1019.7,584.3 1021.9,586.5 1019.1,589.3 1024.1,592.0 1030.7,594.8 1035.7,596.5 1037.4,595.9 1036.3,592.0 1037.2,589.8 1039.0,593.2 1042.9,592.0 1047.3,588.7 1052.3,588.7 1054.0,590.9 1051.8,594.3 1048.4,595.4 1047.3,598.7 1045.1,603.1 1042.9,603.1 1041.8,599.8 1040.1,598.7 1038.5,599.2 1039.0,604.8 1035.2,606.4 1032.9,609.2 1029.1,612.0 1024.1,616.4 1021.3,619.7 1020.2,624.2 1018.5,628.6 1016.3,632.5 1014.7,633.6 1011.9,629.7 1009.1,623.0 1006.4,616.4 1004.7,609.8 1004.2,607.0 1001.9,607.8 1002.5,605.3 999.7,603.1 996.4,602.2 1001.9,600.3 1003.0,597.6 1001.4,595.4Z" fill="#7f6000" stroke="#7f6000" stroke-width=".5"/>
<path d="M1044.6,622.5 1046.0,621.9 1045.7,626.4 1044.0,626.6Z" fill="#7f6000" stroke="#7f6000" stroke-width=".5"/>
<path d="M1032.7,539.2 1036.3,544.6 1040.8,549.1 1046.2,551.8 1051.6,556.3 1060.6,557.2 1069.6,559.0 1078.6,555.4 1083.1,552.7 1083.1,550.0 1089.4,548.2 1095.7,545.5 1099.2,544.6 1096.6,541.9 1092.1,540.1 1094.8,535.6 1100.1,532.0 1100.1,526.6 1104.6,524.8 1110.0,526.6 1112.7,533.8 1119.0,540.1 1122.6,542.8 1127.1,541.9 1125.3,546.4 1120.8,549.1 1119.9,555.4 1111.8,559.0 1107.3,562.6 1102.8,561.7 1098.4,565.3 1096.6,568.0 1101.9,569.8 1103.7,572.5 1097.5,575.2 1098.4,580.6 1102.8,584.2 1102.8,588.7 1100.1,594.9 1095.7,599.4 1091.2,603.0 1085.8,604.8 1081.3,606.6 1079.5,612.0 1076.8,612.0 1077.7,606.6 1073.2,604.8 1069.6,602.1 1064.2,603.0 1060.6,603.9 1057.0,598.5 1056.1,593.1 1053.4,589.6 1046.2,590.5 1039.9,593.1 1036.3,590.5 1033.6,593.1 1030.9,593.1 1023.7,587.8 1019.2,582.4 1013.8,575.2 1009.3,569.8 1008.4,564.4 1012.9,560.8 1017.4,558.1 1021.9,557.2 1021.9,551.8 1026.4,548.2 1027.3,544.6Z" fill="#beb8a7" stroke="#beb8a7" stroke-width=".5"/>
<path d="M1076.5,608.2 1080.4,606.6 1081.5,609.3 1079.3,612.4 1076.3,612.1Z" fill="#beb8a7" stroke="#beb8a7" stroke-width=".5"/>
<path d="M1099.2,600.5 1102.0,597.7 1102.9,601.6 1100.9,605.1Z" fill="#7f6000" stroke="#7f6000" stroke-width=".5"/>
<path d="M1114.0,594.9 1115.8,594.0 1115.3,596.0 1114.2,596.3Z" fill="#7f6000" stroke="#7f6000" stroke-width=".5"/>
<path d="M1107.3,562.6 1111.8,559.0 1119.0,555.4 1119.9,558.1 1117.2,562.6 1113.6,566.2 1114.5,568.0 1110.9,568.9 1108.8,566.2Z" fill="#886e1d" stroke="#886e1d" stroke-width=".5"/>
<path d="M1110.9,568.9 1114.5,568.0 1117.2,570.7 1118.1,575.2 1115.4,576.6 1111.8,577.9 1110.9,573.4Z" fill="#9e9166" stroke="#9e9166" stroke-width=".5"/>
<path d="M1142.4,548.2 1146.0,550.9 1150.5,552.7 1146.9,555.4 1143.3,558.1 1139.7,555.4 1141.5,551.8Z" fill="#958349" stroke="#958349" stroke-width=".5"/>
<path d="M1140.6,558.1 1143.3,562.6 1141.5,569.8 1138.8,576.1 1134.3,576.1 1128.9,577.9 1124.4,580.6 1120.8,586.0 1118.1,581.5 1121.7,577.0 1127.1,574.3 1131.6,572.5 1134.3,569.8 1137.9,566.2 1138.8,560.8Z" fill="#958349" stroke="#958349" stroke-width=".5"/>
<path d="M1100.3,611.5 1104.0,612.1 1104.2,616.0 1102.6,618.7 1104.8,621.0 1107.5,622.1 1110.3,624.8 1110.9,627.6 1108.1,626.5 1105.3,624.3 1102.6,623.7 1099.8,622.6 1098.1,617.6 1099.8,615.4Z" fill="#7f6000" stroke="#7f6000" stroke-width=".5"/>
<path d="M1102.0,624.3 1106.4,625.4 1108.7,628.2 1110.9,630.4 1112.5,633.7 1112.0,637.0 1109.8,638.7 1107.0,637.0 1104.8,634.2 1103.7,635.9 1102.0,635.3 1103.7,632.0 1102.6,628.2Z" fill="#7f6000" stroke="#7f6000" stroke-width=".5"/>
<path d="M1093.2,632.0 1098.1,625.9 1099.2,626.8 1095.4,632.6Z" fill="#7f6000" stroke="#7f6000" stroke-width=".5"/>
<path d="M1084.9,701.0 1086.7,692.9 1093.0,689.3 1101.0,687.5 1104.6,682.1 1109.1,677.6 1113.6,676.7 1118.1,674.9 1119.0,670.4 1127.1,672.2 1132.5,673.1 1133.4,678.5 1139.7,683.0 1141.5,676.7 1143.3,668.9 1146.0,674.0 1149.6,680.3 1152.3,687.5 1158.6,692.9 1160.4,697.4 1164.9,700.1 1165.8,707.3 1164.0,715.4 1160.4,722.6 1157.7,728.9 1150.5,732.5 1145.1,731.6 1139.7,728.9 1137.0,723.5 1131.6,724.4 1128.9,719.0 1123.5,715.4 1114.5,715.4 1107.3,718.1 1101.9,720.8 1094.8,722.9 1089.4,721.7 1089.4,713.6 1086.7,707.3Z" fill="#a39875" stroke="#a39875" stroke-width=".5"/>
<path d="M1147.8,737.0 1155.0,736.6 1155.0,742.4 1151.4,745.4 1148.7,742.4Z" fill="#a39875" stroke="#a39875" stroke-width=".5"/>
<path d="M1203.6,720.8 1206.3,722.6 1208.1,727.1 1212.6,728.9 1215.7,728.9 1214.9,733.4 1210.8,736.1 1209.0,739.7 1205.4,737.9 1207.2,734.3 1205.4,728.0Z" fill="#917c3b" stroke="#917c3b" stroke-width=".5"/>
<path d="M1203.6,736.1 1206.7,738.8 1204.5,744.2 1200.0,748.7 1197.3,752.2 1193.7,754.9 1191.0,751.4 1193.7,746.9 1198.2,743.3 1200.9,738.8Z" fill="#917c3b" stroke="#917c3b" stroke-width=".5"/>
<path d="M1189.6,764.3 1191.0,764.3 1190.6,765.7 1189.6,765.7Z" fill="#917c3b" stroke="#917c3b" stroke-width=".5"/>
<path d="M915.6,710.0 917.6,708.1 918.8,709.5 916.5,711.8Z" fill="#fff"/>
<path d="M923.2,702.6 925.3,702.3 924.9,704.0 923.4,704.0Z" fill="#fff"/>
<path d="M1043.8,590.0 1044.9,589.6 1045.1,590.5 1044.0,590.9Z" fill="#fff"/>
<path d="M1046.2,589.4 1047.6,589.2 1047.7,590.0 1046.5,590.4Z" fill="#fff"/>
<path d="M1048.9,589.6 1050.4,589.6 1050.4,590.5 1049.0,590.7Z" fill="#fff"/>
</g>
<rect x="515.3" y="753.2" width="204.5" height="14" fill="url(#lg)"/>
<g font-family="Liberation Sans, sans-serif" font-size="15.6" fill="#000" stroke="#fff" stroke-width="3.4" paint-order="stroke" stroke-linejoin="round"><text x="498.5" y="765.4">0</text><text x="729.3" y="765.4">25</text></g>
<rect x="489.5" y="322.5" width="742.9" height="460.5" fill="none" stroke="#989898" stroke-width="1.5"/>
</svg>
</div>
<div id="hscroll"></div>
<div id="hthumb"></div>
<div class="abs" style="left:0;top:1154.2px;width:51.5px;height:17.3px;background:#f8f9fa;border-right:1.3px solid #dadce0"></div>
<div id="tabs"></div>
<div id="tabact"></div>
<div class="tabt" style="left:208px;color:#0b57d0;font-weight:bold">Medal Count</div>
<div class="tabt" style="left:408px;color:#444746;letter-spacing:1.1px;font-size:18px">Data</div>
<svg class="abs" style="left:0;top:1172px" width="520" height="47" viewBox="0 1172 520 47" fill="none">
  <path d="M65 1196.3 h13.4 M71.7 1189.6 v13.4" stroke="#444746" stroke-width="1.9"/>
  <path d="M114.6 1191.2 h18 M114.6 1196.3 h18 M114.6 1201.4 h18" stroke="#444746" stroke-width="1.9"/>
  <!-- lock blue -->
  <path d="M187.2 1194 v-3.2 a4.3 4.3 0 0 1 8.6 0 v3.2" stroke="#0b57d0" stroke-width="2.2"/>
  <rect x="183.8" y="1193.6" width="15.4" height="15.4" rx="2.2" fill="#0b57d0"/>
  <circle cx="191.5" cy="1201.6" r="1.9" fill="#e1e9f7"/>
  <path d="M339.4 1194 h10.4 l-5.2 5.2z" fill="#0b57d0"/>
  <!-- lock grey -->
  <path d="M387.7 1194 v-3.2 a4.3 4.3 0 0 1 8.6 0 v3.2" stroke="#444746" stroke-width="2.2"/>
  <rect x="384.3" y="1193.6" width="15.4" height="15.4" rx="2.2" fill="#444746"/>
  <circle cx="392" cy="1201.6" r="1.9" fill="#f9fbfd"/>
  <path d="M464.4 1194 h10.4 l-5.2 5.2z" fill="#444746"/>
</svg>

<div class="abs" style="left:0;top:1217px;width:6px;height:2px;background:linear-gradient(to right,#1a1a1a,rgba(26,26,26,0));border-radius:0 3px 0 0"></div>

</body></html>
